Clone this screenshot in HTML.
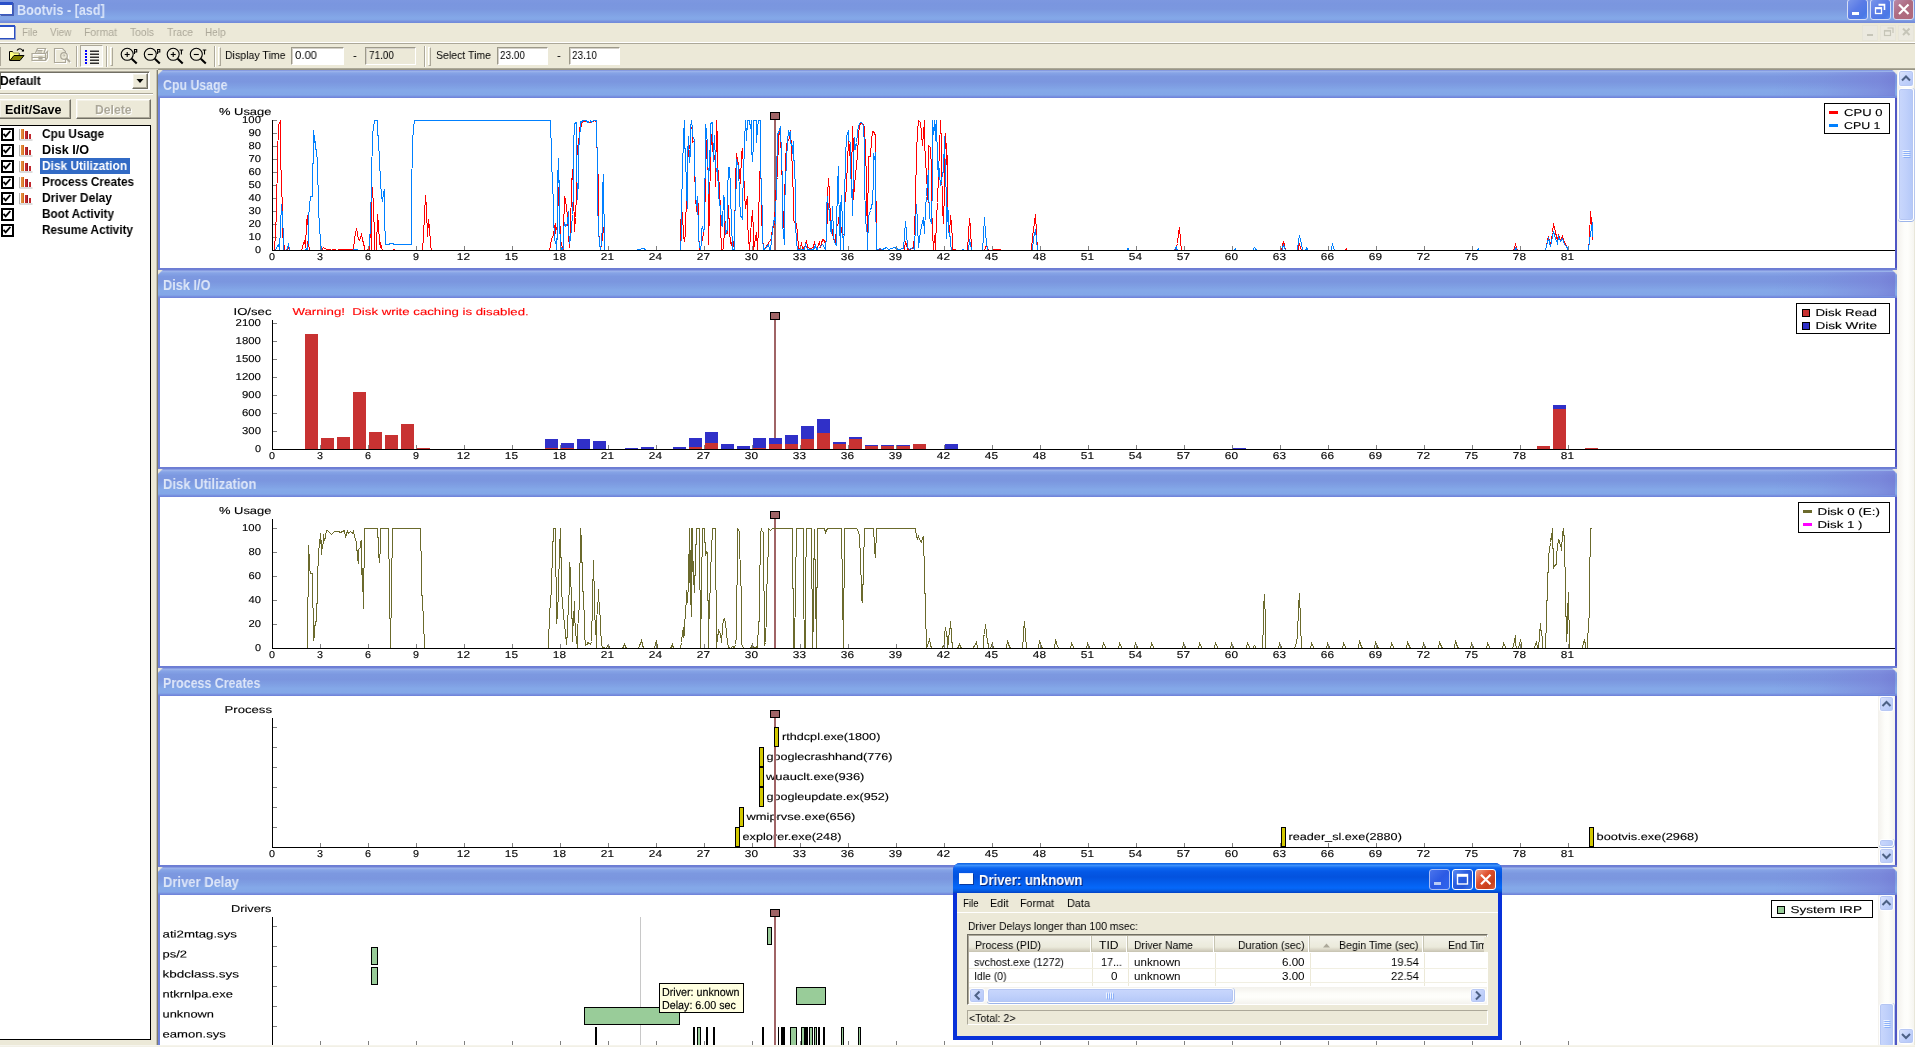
<!DOCTYPE html>
<html><head><meta charset="utf-8"><title>Bootvis - [asd]</title>
<style>
html,body{margin:0;padding:0;}
body{width:1915px;height:1047px;overflow:hidden;background:#ece9d8;position:relative;font-family:"Liberation Sans",sans-serif;}
div,span{position:absolute;box-sizing:border-box;}
.t{white-space:nowrap;line-height:1;transform-origin:0 0;}
svg{position:absolute;left:0;top:0;will-change:transform;}
.t{will-change:transform;}
svg text{font-family:"Liberation Sans",sans-serif;}

.title{left:0;top:0;width:1915px;height:23px;background:linear-gradient(#7d98e0 0px,#7a96df 4px,#7b97df 9px,#7f9fe3 13px,#84a8e8 18px,#82a4e6 20px,#7a93de 21px,#7089d9 23px);}
.cb{top:-1px;width:21px;height:21px;border-radius:3px;border:1px solid #d6def6;background:linear-gradient(135deg,#7a96ea 0%,#5a7be6 45%,#4a78e6 80%,#5a8aee 100%);}
.cb.x{background:linear-gradient(135deg,#b98aa8 0%,#ae6c82 45%,#b0687a 100%);}
.menubar{left:0;top:23px;width:1915px;height:19px;background:#ece9d8;}
.tb{left:0;top:44px;width:1915px;height:25px;background:#ece9d8;}
.fld{top:47px;height:18px;background:#fff;border:1px solid;border-color:#9d9a8a #fff #fff #9d9a8a;box-shadow:inset 1px 1px 0 #d4d0c8;}
.sep{top:46px;width:2px;height:21px;border-left:1px solid #aca899;border-right:1px solid #fff;}
.grip{top:47px;width:3px;height:19px;border:1px solid;border-color:#fff #aca899 #aca899 #fff;}
.btn{background:#ece9d8;border:1px solid;border-color:#fff #716f64 #716f64 #fff;box-shadow:inset -1px -1px 0 #aca899, inset 1px 1px 0 #f4f2e8;}
.cbx{width:13px;height:13px;left:1px;border:2px solid #000;background:#fff;}
.sbtrack{background:linear-gradient(90deg,#f3f1ec 0,#fdfdfa 40%,#fefefb 60%,#f4f3ee 100%);}
.sbbtn{background:linear-gradient(135deg,#dfe7fc 0,#c3d2fb 50%,#b2c6f8 100%);border:1px solid #fff;border-radius:3px;box-shadow:0 0 0 1px #b8c8f4 inset;}
.sbthumb{background:linear-gradient(90deg,#c9d7fc 0,#c1d1fb 45%,#b4c8f8 100%);border:1px solid #fff;border-radius:3px;box-shadow:0 0 0 1px #b5c6f3 inset, 0 1px 0 #9db5ea, 1px 0 0 #b5c6ee;}
.ph{left:158px;width:1739px;height:30px;background:linear-gradient(#6c7bd2 0px,#6f80d6 2px,#9fb6ec 3px,#86a4e6 5px,#7c98e0 8.5px,#7b96df 13.5px,#7e9de2 17.5px,#84a8e8 22.5px,#83a7e8 27px,#7790df 28.5px,#6d80d8 30px);}
.phr{width:120px;height:24px;background:linear-gradient(100deg,rgba(122,124,216,0) 0,rgba(122,124,216,0.15) 40%,rgba(120,122,214,0.5) 85%,rgba(112,112,208,0.6) 100%);}
.pbody{left:160px;width:1735px;background:#fff;}

.dlg{left:953px;top:863px;width:549px;height:177px;background:#0831d9;border-radius:7px 7px 0 0;}
.dtitle{left:953px;top:863px;width:549px;height:30px;border-radius:7px 7px 0 0;background:linear-gradient(#0a5fe0 0px,#3c90fa 2.5px,#0c66f0 5px,#0458e6 9px,#0352de 14px,#0460f0 21px,#0568fa 25px,#0458de 28px,#0340c4 30px);}
.dbody{left:957px;top:893px;width:541px;height:143px;background:#ece9d8;}
.db{top:869px;width:21px;height:21px;border-radius:3px;border:1px solid #fff;background:linear-gradient(135deg,#5c8cf2 0%,#2a5ee0 40%,#2456d8 70%,#3a78ee 100%);}
.db.x{background:linear-gradient(135deg,#f0a088 0%,#e0502e 40%,#c8401c 75%,#e06040 100%);}
.db.dis{background:linear-gradient(135deg,#4a74ec 0%,#2c5ae4 50%,#2f66ee 100%);border-color:#a9bdf5;}
.lvh{top:936px;height:16px;background:linear-gradient(#f3f2ea 0,#ebeadb 11px,#d6d2c2 14px,#c5c2b0 16px);border-right:1px solid #c7c5b2;box-shadow:inset -1px 0 0 #fff;}

</style></head><body>
<div class="title"></div>
<div style="left:0;top:2px;width:13px;height:13px;background:#fff;border:1px solid #3b5bbf;border-left:none;border-top:3px solid #2a50c8;box-shadow:1px 1px 0 #4a60b0"></div>
<span class="t" style="left:17.2px;top:3.2px;font-size:14.3px;font-weight:bold;color:#dbe6f9;transform:scaleX(0.8841);">Bootvis - [asd]</span>
<div class="cb" style="left:1847px"></div>
<div class="cb" style="left:1870px"></div>
<div class="cb x" style="left:1893px"></div>
<svg width="1915" height="23" viewBox="0 0 1915 23">
<rect x="1852" y="12" width="7" height="3" fill="#fff"/>
<path d="M1878.5 4.5h6v5.5 M1878.5 5h6" stroke="#fff" stroke-width="1.6" fill="none"/><rect x="1875.5" y="8" width="6" height="5.5" fill="none" stroke="#fff" stroke-width="1.3"/><rect x="1875" y="7.2" width="7" height="2" fill="#fff"/>
<path d="M1899 4.5l9.5 9.5M1908.5 4.5l-9.5 9.5" stroke="#fff" stroke-width="2.2" fill="none"/>
</svg>
<div class="menubar"></div>
<div style="left:0;top:42px;width:1915px;height:1px;background:#fff"></div>
<div style="left:0;top:43px;width:1915px;height:1px;background:#aca899"></div>
<div style="left:-1px;top:25px;width:16px;height:14px;background:#fff;border:1px solid #2a4fc0;border-top:2px solid #2a50c8;box-shadow:1px 1px 0 #8a9ad0"></div>
<span class="t" style="left:21.5px;top:26.38px;font-size:11.6px;color:#aca899;transform:scaleX(0.8292);">File</span>
<span class="t" style="left:49.7px;top:26.38px;font-size:11.6px;color:#aca899;transform:scaleX(0.8542);">View</span>
<span class="t" style="left:83.5px;top:26.38px;font-size:11.6px;color:#aca899;transform:scaleX(0.8982);">Format</span>
<span class="t" style="left:129.5px;top:26.38px;font-size:11.6px;color:#aca899;transform:scaleX(0.8862);">Tools</span>
<span class="t" style="left:166.5px;top:26.38px;font-size:11.6px;color:#aca899;transform:scaleX(0.8897);">Trace</span>
<span class="t" style="left:205px;top:26.38px;font-size:11.6px;color:#aca899;transform:scaleX(0.8593);">Help</span>
<div style="left:1862px;top:25px;width:16px;height:16px;background:#ebe9df;border:1px solid #e6e4d8"></div>
<div style="left:1880px;top:25px;width:16px;height:16px;background:#ebe9df;border:1px solid #e6e4d8"></div>
<div style="left:1898px;top:25px;width:16px;height:16px;background:#ebe9df;border:1px solid #e6e4d8"></div>
<svg width="1915" height="44" viewBox="0 0 1915 44">
<rect x="1867" y="34" width="6" height="2" fill="#c6c5b8"/>
<path d="M1887.5 28h5.5v5" stroke="#c6c5b8" stroke-width="1.2" fill="none"/><rect x="1884.5" y="30.5" width="6" height="5" fill="none" stroke="#c6c5b8" stroke-width="1.2"/><rect x="1884" y="30" width="7" height="1.6" fill="#c6c5b8"/>
<path d="M1903 28.5l6.5 6.5M1909.5 28.5l-6.5 6.5" stroke="#c6c5b8" stroke-width="2" fill="none"/>
</svg>
<div class="tb"></div>
<div style="left:0;top:68px;width:1915px;height:1px;background:#b5b2a2"></div>
<div style="left:0;top:69px;width:158px;height:1px;background:#d8d5c6"></div>
<div style="left:0;top:47px;width:1px;height:19px;background:#aca899"></div>
<div class="sep" style="left:76px"></div>
<div style="left:80px;top:45px;width:23px;height:22px;background:#f6f5ee;border:1px solid;border-color:#aca899 #fff #fff #aca899"></div>
<div class="sep" style="left:106px"></div>
<div class="grip" style="left:110px"></div>
<div class="sep" style="left:214px"></div>
<div class="grip" style="left:218px"></div>
<div class="sep" style="left:424px"></div>
<div class="grip" style="left:428px"></div>
<span class="t" style="left:225px;top:49.18px;font-size:11.6px;color:#000;transform:scaleX(0.9112);">Display Time</span>
<div class="fld" style="left:291px;width:53px"></div>
<span class="t" style="left:295px;top:49.18px;font-size:11.6px;color:#000;transform:scaleX(0.9744);">0.00</span>
<span class="t" style="left:353px;top:49.18px;font-size:11.6px;color:#000;transform:scaleX(0.9060);">-</span>
<div class="fld" style="left:365px;width:51px;background:#ece9d8"></div>
<span class="t" style="left:368.5px;top:49.18px;font-size:11.6px;color:#000;transform:scaleX(0.8612);">71.00</span>
<span class="t" style="left:436px;top:49.18px;font-size:11.6px;color:#000;transform:scaleX(0.9076);">Select Time</span>
<div class="fld" style="left:497px;width:51px"></div>
<span class="t" style="left:500px;top:49.18px;font-size:11.6px;color:#000;transform:scaleX(0.8612);">23.00</span>
<span class="t" style="left:557px;top:49.18px;font-size:11.6px;color:#000;transform:scaleX(0.9060);">-</span>
<div class="fld" style="left:569px;width:51px"></div>
<span class="t" style="left:572px;top:49.18px;font-size:11.6px;color:#000;transform:scaleX(0.8612);">23.10</span>
<div style="left:0;top:70px;width:158px;height:975px;background:#ece9d8"></div>
<div style="left:156px;top:70px;width:2px;height:975px;background:linear-gradient(90deg,#c4c1b0 0,#c4c1b0 50%,#807d6d 50%,#807d6d 100%)"></div>
<div style="left:-1px;top:71px;width:151px;height:19px;background:#fff;border:1px solid;border-color:#aca899 #fff #fff #aca899;box-shadow:inset 1px 1px 0 #716f64"></div>
<span class="t" style="left:0.2px;top:74.97px;font-size:12.2px;font-weight:bold;color:#000;transform:scaleX(0.9867);">Default</span>
<div class="btn" style="left:132px;top:73px;width:16px;height:16px"></div>
<svg width="160" height="100" viewBox="0 0 160 100"><path d="M136.5 79h7l-3.5 4z" fill="#000"/></svg>
<div style="left:0;top:93px;width:153px;height:2px;border-top:1px solid #aca899;border-bottom:1px solid #fff"></div>
<div class="btn" style="left:-1px;top:99px;width:72px;height:20px"></div>
<span class="t" style="left:4.5px;top:103.57px;font-size:12.2px;font-weight:bold;color:#000;transform:scaleX(1.0287);">Edit/Save</span>
<div class="btn" style="left:76px;top:99px;width:75px;height:20px"></div>
<span class="t" style="left:95.5px;top:104.57px;font-size:12.2px;font-weight:bold;color:#fff;transform:scaleX(0.9967);">Delete</span>
<span class="t" style="left:94.5px;top:103.57px;font-size:12.2px;font-weight:bold;color:#aca899;transform:scaleX(0.9967);">Delete</span>
<div style="left:-1px;top:125px;width:152px;height:915px;background:#fff;border:1px solid #000"></div>
<div class="cbx" style="top:128px"></div>
<span class="t" style="left:41.9px;top:127.87px;font-size:12.2px;font-weight:bold;color:#000;transform:scaleX(0.9745);">Cpu Usage</span>
<div class="cbx" style="top:144px"></div>
<span class="t" style="left:41.9px;top:143.87px;font-size:12.2px;font-weight:bold;color:#000;transform:scaleX(1.0368);">Disk I/O</span>
<div class="cbx" style="top:160px"></div>
<div style="left:40px;top:158px;width:90px;height:16px;background:#316ac5"></div>
<span class="t" style="left:41.9px;top:159.87px;font-size:12.2px;font-weight:bold;color:#fff;transform:scaleX(0.9732);">Disk Utilization</span>
<div class="cbx" style="top:176px"></div>
<span class="t" style="left:41.9px;top:175.87px;font-size:12.2px;font-weight:bold;color:#000;transform:scaleX(0.9631);">Process Creates</span>
<div class="cbx" style="top:192px"></div>
<span class="t" style="left:41.9px;top:191.87px;font-size:12.2px;font-weight:bold;color:#000;transform:scaleX(0.9844);">Driver Delay</span>
<div class="cbx" style="top:208px"></div>
<span class="t" style="left:41.9px;top:207.87px;font-size:12.2px;font-weight:bold;color:#000;transform:scaleX(0.9641);">Boot Activity</span>
<div class="cbx" style="top:224px"></div>
<span class="t" style="left:41.9px;top:223.87px;font-size:12.2px;font-weight:bold;color:#000;transform:scaleX(0.9643);">Resume Activity</span>
<svg width="160" height="260" viewBox="0 0 160 260"><path d="M3.5 133.8 l2.2 2.6 l4.6 -5.4" stroke="#000" stroke-width="1.9" fill="none"/><path d="M19.5 129 v11 h13" stroke="#b9b9b9" stroke-width="1" fill="none"/><rect x="21" y="129" width="2" height="10" fill="#e08a3a"/><rect x="23" y="129" width="1" height="10" fill="#d2691e"/><rect x="25" y="131" width="2" height="8" fill="#c2272d"/><rect x="27" y="131" width="1" height="8" fill="#8e1a20"/><rect x="29" y="134" width="2" height="5" fill="#c2272d"/><path d="M3.5 149.8 l2.2 2.6 l4.6 -5.4" stroke="#000" stroke-width="1.9" fill="none"/><path d="M19.5 145 v11 h13" stroke="#b9b9b9" stroke-width="1" fill="none"/><rect x="21" y="145" width="2" height="10" fill="#e08a3a"/><rect x="23" y="145" width="1" height="10" fill="#d2691e"/><rect x="25" y="147" width="2" height="8" fill="#c2272d"/><rect x="27" y="147" width="1" height="8" fill="#8e1a20"/><rect x="29" y="150" width="2" height="5" fill="#c2272d"/><path d="M3.5 165.8 l2.2 2.6 l4.6 -5.4" stroke="#000" stroke-width="1.9" fill="none"/><path d="M19.5 161 v11 h13" stroke="#b9b9b9" stroke-width="1" fill="none"/><rect x="21" y="161" width="2" height="10" fill="#e08a3a"/><rect x="23" y="161" width="1" height="10" fill="#d2691e"/><rect x="25" y="163" width="2" height="8" fill="#c2272d"/><rect x="27" y="163" width="1" height="8" fill="#8e1a20"/><rect x="29" y="166" width="2" height="5" fill="#c2272d"/><path d="M3.5 181.8 l2.2 2.6 l4.6 -5.4" stroke="#000" stroke-width="1.9" fill="none"/><path d="M19.5 177 v11 h13" stroke="#b9b9b9" stroke-width="1" fill="none"/><rect x="21" y="177" width="2" height="10" fill="#e08a3a"/><rect x="23" y="177" width="1" height="10" fill="#d2691e"/><rect x="25" y="179" width="2" height="8" fill="#c2272d"/><rect x="27" y="179" width="1" height="8" fill="#8e1a20"/><rect x="29" y="182" width="2" height="5" fill="#c2272d"/><path d="M3.5 197.8 l2.2 2.6 l4.6 -5.4" stroke="#000" stroke-width="1.9" fill="none"/><path d="M19.5 193 v11 h13" stroke="#b9b9b9" stroke-width="1" fill="none"/><rect x="21" y="193" width="2" height="10" fill="#e08a3a"/><rect x="23" y="193" width="1" height="10" fill="#d2691e"/><rect x="25" y="195" width="2" height="8" fill="#c2272d"/><rect x="27" y="195" width="1" height="8" fill="#8e1a20"/><rect x="29" y="198" width="2" height="5" fill="#c2272d"/><path d="M3.5 213.8 l2.2 2.6 l4.6 -5.4" stroke="#000" stroke-width="1.9" fill="none"/><path d="M3.5 229.8 l2.2 2.6 l4.6 -5.4" stroke="#000" stroke-width="1.9" fill="none"/></svg>
<div style="left:0;top:1045px;width:1915px;height:2px;background:#f4f3ea"></div>
<div class="sbtrack" style="left:1897px;top:70px;width:18px;height:975px"></div>
<div style="left:1914px;top:70px;width:1px;height:975px;background:#e9e7da"></div>
<div class="sbbtn" style="left:1898px;top:70px;width:16px;height:17px"></div>
<div class="sbthumb" style="left:1898px;top:88px;width:16px;height:133px"></div>
<div class="sbbtn" style="left:1898px;top:1028px;width:16px;height:16px"></div>
<svg width="1915" height="1047" viewBox="0 0 1915 1047">
<path d="M1902 80.5l4-4l4 4" stroke="#4d6185" stroke-width="2" fill="none"/>
<path d="M1902 1034l4 4l4-4" stroke="#4d6185" stroke-width="2" fill="none"/>
<path d="M1902.5 150.5h7M1902.5 152.5h7M1902.5 154.5h7M1902.5 156.5h7" stroke="#eef4fe" stroke-width="1"/>
<path d="M1903.5 151.5h7M1903.5 153.5h7M1903.5 155.5h7M1903.5 157.5h7" stroke="#8cb0f8" stroke-width="1"/>
</svg>
<div class="pbody" style="top:98px;height:170px"></div>
<div style="left:158px;top:68px;width:2px;height:200px;background:#6f82dc"></div>
<div style="left:1895px;top:68px;width:2px;height:200px;background:#4f56c4"></div>
<div class="ph" style="top:68px"></div>
<div class="phr" style="left:1775px;top:72px"></div>
<div style="left:158px;top:70px;width:5px;height:5px;background:linear-gradient(135deg,#ece9d8 0,#ece9d8 38%,rgba(236,233,216,0) 55%)"></div>
<div style="left:1892px;top:70px;width:5px;height:5px;background:linear-gradient(225deg,#f0eee2 0,#f0eee2 38%,rgba(236,233,216,0) 55%)"></div>
<div class="pbody" style="top:298px;height:169px"></div>
<div style="left:158px;top:268px;width:2px;height:199px;background:#6f82dc"></div>
<div style="left:1895px;top:268px;width:2px;height:199px;background:#4f56c4"></div>
<div class="ph" style="top:268px"></div>
<div class="phr" style="left:1775px;top:272px"></div>
<div style="left:158px;top:270px;width:5px;height:5px;background:linear-gradient(135deg,#ece9d8 0,#ece9d8 38%,rgba(236,233,216,0) 55%)"></div>
<div style="left:1892px;top:270px;width:5px;height:5px;background:linear-gradient(225deg,#f0eee2 0,#f0eee2 38%,rgba(236,233,216,0) 55%)"></div>
<div class="pbody" style="top:497px;height:169px"></div>
<div style="left:158px;top:467px;width:2px;height:199px;background:#6f82dc"></div>
<div style="left:1895px;top:467px;width:2px;height:199px;background:#4f56c4"></div>
<div class="ph" style="top:467px"></div>
<div class="phr" style="left:1775px;top:471px"></div>
<div style="left:158px;top:469px;width:5px;height:5px;background:linear-gradient(135deg,#ece9d8 0,#ece9d8 38%,rgba(236,233,216,0) 55%)"></div>
<div style="left:1892px;top:469px;width:5px;height:5px;background:linear-gradient(225deg,#f0eee2 0,#f0eee2 38%,rgba(236,233,216,0) 55%)"></div>
<div class="pbody" style="top:696px;height:169px"></div>
<div style="left:158px;top:666px;width:2px;height:199px;background:#6f82dc"></div>
<div style="left:1895px;top:666px;width:2px;height:199px;background:#4f56c4"></div>
<div class="ph" style="top:666px"></div>
<div class="phr" style="left:1775px;top:670px"></div>
<div style="left:158px;top:668px;width:5px;height:5px;background:linear-gradient(135deg,#ece9d8 0,#ece9d8 38%,rgba(236,233,216,0) 55%)"></div>
<div style="left:1892px;top:668px;width:5px;height:5px;background:linear-gradient(225deg,#f0eee2 0,#f0eee2 38%,rgba(236,233,216,0) 55%)"></div>
<div class="pbody" style="top:895px;height:150px"></div>
<div style="left:158px;top:865px;width:2px;height:180px;background:#6f82dc"></div>
<div style="left:1895px;top:865px;width:2px;height:180px;background:#4f56c4"></div>
<div class="ph" style="top:865px"></div>
<div class="phr" style="left:1775px;top:869px"></div>
<div style="left:158px;top:867px;width:5px;height:5px;background:linear-gradient(135deg,#ece9d8 0,#ece9d8 38%,rgba(236,233,216,0) 55%)"></div>
<div style="left:1892px;top:867px;width:5px;height:5px;background:linear-gradient(225deg,#f0eee2 0,#f0eee2 38%,rgba(236,233,216,0) 55%)"></div>
<span class="t" style="left:162.6px;top:79.32px;font-size:13.8px;font-weight:bold;color:#dde6f8;transform:scaleX(0.8934);">Cpu Usage</span>
<span class="t" style="left:162.6px;top:279.32px;font-size:13.8px;font-weight:bold;color:#dde6f8;transform:scaleX(0.9224);">Disk I/O</span>
<span class="t" style="left:162.6px;top:478.32px;font-size:13.8px;font-weight:bold;color:#dde6f8;transform:scaleX(0.9443);">Disk Utilization</span>
<span class="t" style="left:162.6px;top:677.32px;font-size:13.8px;font-weight:bold;color:#dde6f8;transform:scaleX(0.9004);">Process Creates</span>
<span class="t" style="left:162.6px;top:876.32px;font-size:13.8px;font-weight:bold;color:#dde6f8;transform:scaleX(0.9423);">Driver Delay</span>
<div style="left:158px;top:68px;width:1757px;height:2px;background:linear-gradient(#b5b2a2,#8f8c7c)"></div>
<svg width="240" height="70" viewBox="0 0 240 70"><path d="M9.5 60.5v-9h3l1 1.5h5.5v3" fill="#ffff66" stroke="#000" stroke-width="1"/><rect x="10" y="52" width="9" height="6" fill="#ffff99" opacity="0.6"/><path d="M10 60.5l4-5h10l-4 5z" fill="#808000" stroke="#000" stroke-width="1"/><path d="M17 50.5c1.5-2.5 4.5-2.5 6 0.5" fill="none" stroke="#000" stroke-width="1.1"/><path d="M21.5 51.5h2.5v-2.5z" fill="#000"/><g transform="translate(1,1)" stroke="#fff" fill="none" stroke-width="1.2"><path d="M35.5 53l2-4.5h8l-1.5 4.5M32 53.500h13.500l2-2v6l-2 3h-13.500zM32 57.500h13.500"/></g><g stroke="#aca899" fill="none" stroke-width="1.2"><path d="M35.500 53l2-4.500h8l-1.500 4.500M32 53.500h13.500l2-2v6l-2 3h-13.500zM32 57.500h13.500M45.500 53.500v7M37.500 50.500h5M37 52h5"/><rect x="39" y="57" width="3" height="2" fill="#aca899"/></g><g transform="translate(1,1)" stroke="#fff" fill="none" stroke-width="1.2"><path d="M54.500 48.500h8l3 3v11h-11z"/><circle cx="64" cy="56" r="3.3"/><path d="M66.500 58.500l3.500 3.500"/></g><g stroke="#aca899" fill="none" stroke-width="1.2"><path d="M54.500 48.500h8l3 3v11h-11z"/><circle cx="64" cy="56" r="3.300" fill="#ece9d8"/><path d="M66.500 58.500l3.500 3.500" stroke-width="1.8"/><path d="M63 55.500c1-1.500 2.500-0.500 1 1" stroke-width="1"/></g><rect x="85" y="50" width="2" height="2" fill="#0000ff"/><rect x="90" y="50.6" width="9" height="1.2" fill="#000"/><rect x="85" y="53" width="2" height="2" fill="#0000ff"/><rect x="90" y="53.6" width="9" height="1.2" fill="#000"/><rect x="85" y="56" width="2" height="2" fill="#0000ff"/><rect x="90" y="56.6" width="9" height="1.2" fill="#000"/><rect x="85" y="59" width="2" height="2" fill="#0000ff"/><rect x="90" y="59.6" width="9" height="1.2" fill="#000"/><rect x="85" y="62" width="2" height="2" fill="#0000ff"/><rect x="90" y="62.6" width="9" height="1.2" fill="#000"/><circle cx="127.2" cy="54.3" r="6" fill="none" stroke="#000" stroke-width="1.1"/><path d="M131.7 58.8l5 4.700" stroke="#000" stroke-width="2.1"/><path d="M124.7 54.500h5" stroke="#000" stroke-width="1.1"/><path d="M127.2 52v5" stroke="#000" stroke-width="1.1"/><path d="M134.5 54v-4.500h2.200v2.500h-2.200" stroke="#000" stroke-width="1.1" fill="none"/><circle cx="150.3" cy="54.3" r="6" fill="none" stroke="#000" stroke-width="1.1"/><path d="M154.8 58.8l5 4.700" stroke="#000" stroke-width="2.1"/><path d="M147.8 54.500h5" stroke="#000" stroke-width="1.1"/><path d="M157.6 54v-4.500h2.200v2.500h-2.200" stroke="#000" stroke-width="1.1" fill="none"/><circle cx="173.2" cy="54.3" r="6" fill="none" stroke="#000" stroke-width="1.1"/><path d="M177.7 58.8l5 4.700" stroke="#000" stroke-width="2.1"/><path d="M170.7 54.500h5" stroke="#000" stroke-width="1.1"/><path d="M173.2 52v5" stroke="#000" stroke-width="1.1"/><path d="M179.6 50h3.600M181.4 50v4.500" stroke="#000" stroke-width="1.1" fill="none"/><circle cx="196.3" cy="54.3" r="6" fill="none" stroke="#000" stroke-width="1.1"/><path d="M200.8 58.8l5 4.700" stroke="#000" stroke-width="2.1"/><path d="M193.8 54.500h5" stroke="#000" stroke-width="1.1"/><path d="M202.7 50h3.600M204.5 50v4.500" stroke="#000" stroke-width="1.1" fill="none"/></svg>
<div class="sbtrack" style="left:1878px;top:696px;width:17px;height:169px"></div>
<div class="sbbtn" style="left:1879px;top:696px;width:15px;height:16px"></div>
<div class="sbbtn" style="left:1879px;top:848px;width:15px;height:16px"></div>
<div class="sbthumb" style="left:1879px;top:839px;width:15px;height:8px"></div>
<div class="sbtrack" style="left:1878px;top:895px;width:17px;height:150px"></div>
<div class="sbbtn" style="left:1879px;top:895px;width:15px;height:16px"></div>
<div class="sbthumb" style="left:1879px;top:1003px;width:15px;height:44px"></div>
<svg width="1915" height="1047" viewBox="0 0 1915 1047">
<rect x="272" y="120" width="1" height="131" fill="#000"/>
<text transform="translate(254.95,253) scale(0.2719,0.2500) rotate(0.05)" font-size="40" fill="#000" stroke="#000" stroke-width="0.5">0</text>
<rect x="273" y="237" width="4" height="1" fill="#808080"/>
<text transform="translate(248.5,240) scale(0.2809,0.2500) rotate(0.05)" font-size="40" fill="#000" stroke="#000" stroke-width="0.5">10</text>
<rect x="273" y="224" width="4" height="1" fill="#808080"/>
<text transform="translate(248.5,227) scale(0.2809,0.2500) rotate(0.05)" font-size="40" fill="#000" stroke="#000" stroke-width="0.5">20</text>
<rect x="273" y="211" width="4" height="1" fill="#808080"/>
<text transform="translate(248.5,214) scale(0.2809,0.2500) rotate(0.05)" font-size="40" fill="#000" stroke="#000" stroke-width="0.5">30</text>
<rect x="273" y="198" width="4" height="1" fill="#808080"/>
<text transform="translate(248.5,201) scale(0.2809,0.2500) rotate(0.05)" font-size="40" fill="#000" stroke="#000" stroke-width="0.5">40</text>
<rect x="273" y="185" width="4" height="1" fill="#808080"/>
<text transform="translate(248.5,188) scale(0.2809,0.2500) rotate(0.05)" font-size="40" fill="#000" stroke="#000" stroke-width="0.5">50</text>
<rect x="273" y="172" width="4" height="1" fill="#808080"/>
<text transform="translate(248.5,175) scale(0.2809,0.2500) rotate(0.05)" font-size="40" fill="#000" stroke="#000" stroke-width="0.5">60</text>
<rect x="273" y="159" width="4" height="1" fill="#808080"/>
<text transform="translate(248.5,162) scale(0.2809,0.2500) rotate(0.05)" font-size="40" fill="#000" stroke="#000" stroke-width="0.5">70</text>
<rect x="273" y="146" width="4" height="1" fill="#808080"/>
<text transform="translate(248.5,149) scale(0.2809,0.2500) rotate(0.05)" font-size="40" fill="#000" stroke="#000" stroke-width="0.5">80</text>
<rect x="273" y="133" width="4" height="1" fill="#808080"/>
<text transform="translate(248.5,136) scale(0.2809,0.2500) rotate(0.05)" font-size="40" fill="#000" stroke="#000" stroke-width="0.5">90</text>
<rect x="273" y="120" width="4" height="1" fill="#808080"/>
<text transform="translate(242.05,123) scale(0.2839,0.2500) rotate(0.05)" font-size="40" fill="#000" stroke="#000" stroke-width="0.5">100</text>
<text transform="translate(219,115) scale(0.3235,0.2500) rotate(0.05)" font-size="40" fill="#000" stroke="#000" stroke-width="0.5">% Usage</text>
<rect x="774" y="120" width="2" height="130" fill="#a06466"/><rect x="770.5" y="112.5" width="9" height="7" fill="#a06466" stroke="#000" stroke-width="1"/>
<polyline points="274.5,250.5 276.5,213.5 277.5,156.5 278.5,125.5 280.5,120.5 280.5,155.5 281.5,183.5 282.5,210.5 282.5,236.5 283.5,238.5 284.5,250.5 287.5,250.5 288.5,247.5 289.5,250.5 301.5,250.5 303.5,243.5 304.5,240.5 305.5,247.5 306.5,223.5 307.5,215.5 308.5,233.5 307.5,249.5 308.5,242.5 309.5,250.5 321.5,250.5 323.5,247.5 326.5,249.5 330.5,249.5 331.5,250.5 333.5,249.5 335.5,249.5 336.5,250.5 339.5,249.5 353.5,249.5 354.5,238.5 356.5,228.5 357.5,233.5 358.5,239.5 359.5,240.5 361.5,234.5 362.5,239.5 364.5,247.5 364.5,250.5 369.5,249.5 370.5,225.5 371.5,249.5 371.5,208.5 372.5,187.5 373.5,207.5 374.5,236.5 374.5,250.5 376.5,250.5 377.5,214.5 378.5,224.5 379.5,242.5 380.5,247.5 380.5,242.5 381.5,247.5 382.5,250.5 393.5,250.5 393.5,249.5 394.5,249.5 394.5,250.5 422.5,250.5 423.5,235.5 424.5,214.5 425.5,195.5 426.5,208.5 427.5,236.5 428.5,219.5 429.5,227.5 430.5,244.5 431.5,250.5" fill="none" stroke="#ff0000" stroke-width="1" stroke-linejoin="miter" shape-rendering="crispEdges"/>
<polyline points="549.5,250.5 550.5,245.5 551.5,238.5 553.5,235.5 554.5,227.5 555.5,223.5 555.5,233.5 556.5,227.5 557.5,226.5 558.5,187.5 559.5,201.5 559.5,223.5 560.5,229.5 560.5,238.5 561.5,244.5 562.5,247.5 563.5,250.5 563.5,233.5 564.5,196.5 565.5,199.5 567.5,216.5 568.5,235.5 569.5,247.5 570.5,230.5 571.5,186.5 572.5,169.5 573.5,190.5 574.5,231.5 575.5,217.5 576.5,193.5 576.5,164.5 577.5,146.5 578.5,143.5 580.5,121.5 580.5,131.5 581.5,122.5 584.5,121.5 589.5,122.5 591.5,122.5 594.5,120.5 596.5,121.5 596.5,146.5 597.5,148.5 598.5,198.5 598.5,230.5 600.5,250.5 600.5,249.5 602.5,238.5 603.5,227.5 604.5,238.5 604.5,250.5 680.5,250.5 680.5,229.5 681.5,208.5 682.5,214.5 683.5,235.5 684.5,241.5 685.5,232.5 686.5,193.5 687.5,204.5 687.5,161.5 689.5,145.5 690.5,149.5 690.5,128.5 692.5,127.5 692.5,142.5 694.5,140.5 694.5,167.5 695.5,195.5 696.5,211.5 697.5,196.5 698.5,208.5 698.5,230.5 699.5,250.5 701.5,244.5 702.5,238.5 704.5,227.5 705.5,179.5 706.5,140.5 707.5,145.5 708.5,193.5 708.5,244.5 709.5,208.5 710.5,156.5 711.5,134.5 712.5,142.5 713.5,161.5 715.5,153.5 715.5,186.5 716.5,120.5 717.5,140.5 717.5,179.5 718.5,170.5 719.5,192.5 720.5,207.5 720.5,224.5 721.5,250.5 723.5,249.5 724.5,226.5 724.5,208.5 725.5,232.5 727.5,233.5 728.5,205.5 729.5,230.5 730.5,243.5 731.5,242.5 732.5,249.5 734.5,238.5 735.5,182.5 736.5,153.5 737.5,159.5 738.5,164.5 740.5,183.5 741.5,153.5 742.5,149.5 742.5,147.5 742.5,149.5 743.5,167.5 744.5,193.5 745.5,208.5 746.5,201.5 747.5,196.5 747.5,222.5 749.5,250.5 750.5,233.5 752.5,210.5 753.5,232.5 753.5,250.5 756.5,232.5 757.5,249.5 758.5,226.5 759.5,179.5 760.5,163.5 761.5,193.5 761.5,215.5 762.5,236.5 763.5,249.5 765.5,247.5 771.5,238.5 772.5,226.5 773.5,227.5 774.5,222.5 776.5,179.5 777.5,177.5 778.5,134.5 779.5,130.5 780.5,139.5 781.5,156.5 782.5,193.5 783.5,227.5 784.5,207.5 785.5,162.5 786.5,143.5 788.5,140.5 789.5,137.5 790.5,130.5 791.5,149.5 792.5,171.5 793.5,202.5 793.5,220.5 795.5,223.5 796.5,223.5 797.5,233.5 798.5,247.5 799.5,249.5 801.5,243.5 802.5,248.5 804.5,247.5 806.5,240.5 807.5,247.5 810.5,248.5 813.5,247.5 814.5,241.5 815.5,247.5 817.5,247.5 819.5,241.5 820.5,247.5 822.5,239.5 824.5,240.5 825.5,244.5 826.5,237.5 827.5,210.5 827.5,196.5 828.5,178.5 829.5,192.5 830.5,223.5 830.5,216.5 832.5,233.5 833.5,238.5 835.5,242.5 836.5,226.5 838.5,223.5 838.5,217.5 840.5,214.5 840.5,223.5 842.5,235.5 844.5,233.5 844.5,202.5 845.5,201.5 847.5,164.5 848.5,138.5 850.5,161.5 851.5,179.5 852.5,126.5 853.5,149.5 853.5,199.5 854.5,185.5 856.5,164.5 857.5,155.5 858.5,134.5 859.5,125.5 860.5,123.5 862.5,123.5 864.5,127.5 865.5,149.5 866.5,182.5 866.5,199.5 867.5,231.5 868.5,156.5 870.5,156.5 871.5,140.5 872.5,131.5 874.5,132.5 875.5,136.5 875.5,193.5 876.5,207.5 876.5,249.5 878.5,249.5 880.5,248.5 881.5,250.5 904.5,250.5 904.5,249.5 905.5,241.5 906.5,244.5 907.5,249.5 910.5,249.5 913.5,247.5 914.5,235.5 915.5,198.5 916.5,153.5 917.5,131.5 918.5,120.5 920.5,122.5 921.5,133.5 922.5,145.5 924.5,120.5 924.5,136.5 925.5,165.5 926.5,170.5 927.5,196.5 928.5,202.5 928.5,145.5 930.5,147.5 931.5,170.5 931.5,202.5 932.5,232.5 933.5,249.5 934.5,235.5 935.5,249.5 936.5,217.5 937.5,202.5 938.5,174.5 939.5,149.5 940.5,120.5 941.5,145.5 941.5,161.5 942.5,208.5 943.5,223.5 944.5,189.5 944.5,143.5 945.5,133.5 946.5,164.5 946.5,143.5 947.5,165.5 947.5,208.5 948.5,214.5 949.5,235.5 950.5,215.5 951.5,223.5 952.5,242.5 952.5,249.5 955.5,249.5 955.5,250.5 967.5,250.5 968.5,233.5 969.5,218.5 970.5,227.5 971.5,249.5" fill="none" stroke="#ff0000" stroke-width="1" stroke-linejoin="miter" shape-rendering="crispEdges"/>
<polyline points="984.5,250.5 985.5,247.5 986.5,245.5 987.5,247.5 988.5,250.5 992.5,250.5 992.5,249.5 1000.5,249.5 1000.5,250.5 1031.5,250.5 1032.5,236.5 1034.5,222.5 1035.5,214.5 1036.5,232.5 1037.5,250.5 1175.5,250.5 1177.5,243.5 1178.5,233.5 1179.5,227.5 1180.5,240.5 1181.5,250.5 1281.5,250.5 1282.5,245.5 1283.5,241.5 1284.5,245.5 1285.5,250.5 1298.5,250.5 1298.5,246.5 1299.5,244.5 1300.5,247.5 1301.5,250.5 1344.5,250.5 1345.5,249.5 1346.5,248.5 1346.5,249.5 1347.5,250.5 1513.5,250.5 1514.5,247.5 1515.5,244.5 1516.5,247.5 1517.5,250.5 1545.5,250.5 1547.5,240.5 1548.5,236.5 1550.5,245.5 1552.5,232.5 1553.5,223.5 1555.5,232.5 1557.5,240.5 1558.5,234.5 1560.5,240.5 1562.5,236.5 1564.5,242.5 1566.5,245.5 1568.5,250.5 1588.5,250.5 1589.5,238.5 1590.5,211.5 1591.5,222.5 1592.5,226.5 1592.5,239.5" fill="none" stroke="#ff0000" stroke-width="1" stroke-linejoin="miter" shape-rendering="crispEdges"/>
<polyline points="275.5,250.5 276.5,247.5 278.5,244.5 279.5,249.5 279.5,250.5 280.5,226.5 281.5,204.5 282.5,217.5 283.5,238.5 283.5,250.5 286.5,250.5 288.5,244.5 289.5,249.5 289.5,250.5 305.5,250.5 306.5,248.5 306.5,250.5 307.5,250.5 308.5,238.5 308.5,217.5 309.5,206.5 310.5,196.5 312.5,196.5 312.5,164.5 313.5,162.5 313.5,130.5 314.5,142.5 314.5,135.5 315.5,145.5 315.5,149.5 316.5,149.5 317.5,164.5 317.5,167.5 318.5,201.5 318.5,208.5 319.5,226.5 320.5,241.5 321.5,250.5 353.5,250.5 353.5,249.5 357.5,249.5 357.5,250.5 368.5,250.5 369.5,242.5 370.5,226.5 371.5,179.5 372.5,135.5 373.5,127.5 374.5,120.5 377.5,120.5 377.5,134.5 378.5,136.5 379.5,164.5 380.5,176.5 380.5,179.5 380.5,182.5 381.5,195.5 382.5,201.5 383.5,192.5 384.5,189.5 384.5,217.5 385.5,244.5 387.5,244.5 391.5,243.5 395.5,244.5 411.5,244.5 411.5,196.5 412.5,142.5 413.5,127.5 414.5,120.5 502.5,120.5 550.5,120.5 550.5,137.5 551.5,138.5 551.5,171.5 552.5,172.5 553.5,214.5 553.5,216.5 554.5,238.5 555.5,243.5 556.5,238.5 556.5,250.5 557.5,230.5 557.5,182.5 558.5,158.5 558.5,182.5 559.5,180.5 559.5,223.5 560.5,244.5 561.5,249.5 562.5,249.5 563.5,247.5 563.5,230.5 564.5,222.5 565.5,226.5 567.5,223.5 568.5,211.5 568.5,227.5 569.5,243.5 570.5,238.5 571.5,227.5 572.5,214.5 573.5,190.5 573.5,146.5 574.5,123.5 576.5,122.5 576.5,164.5 577.5,199.5 578.5,179.5 578.5,146.5 579.5,142.5 580.5,121.5 581.5,122.5 582.5,120.5 586.5,120.5 587.5,122.5 589.5,121.5 590.5,120.5 591.5,122.5 593.5,120.5 596.5,120.5 596.5,146.5 597.5,147.5 597.5,201.5 598.5,230.5 599.5,243.5 600.5,250.5 601.5,242.5 602.5,223.5 602.5,190.5 603.5,174.5 603.5,213.5 604.5,214.5 604.5,250.5 637.5,250.5 637.5,249.5 644.5,248.5 645.5,250.5 680.5,250.5 681.5,232.5 681.5,208.5 682.5,171.5 683.5,136.5 684.5,120.5 684.5,147.5 685.5,149.5 686.5,193.5 687.5,208.5 687.5,155.5 688.5,136.5 689.5,162.5 690.5,152.5 690.5,128.5 691.5,120.5 692.5,128.5 692.5,136.5 694.5,139.5 694.5,158.5 695.5,193.5 696.5,205.5 697.5,196.5 698.5,232.5 698.5,238.5 699.5,245.5 700.5,250.5 701.5,242.5 701.5,230.5 702.5,226.5 703.5,231.5 704.5,227.5 704.5,179.5 705.5,177.5 705.5,124.5 706.5,131.5 707.5,146.5 707.5,140.5 708.5,193.5 709.5,150.5 710.5,156.5 710.5,123.5 712.5,122.5 713.5,161.5 714.5,135.5 715.5,164.5 716.5,170.5 717.5,168.5 718.5,192.5 719.5,205.5 720.5,205.5 721.5,224.5 722.5,226.5 723.5,195.5 724.5,198.5 724.5,211.5 725.5,233.5 727.5,229.5 727.5,193.5 728.5,167.5 729.5,167.5 730.5,187.5 730.5,189.5 731.5,227.5 732.5,244.5 732.5,249.5 734.5,249.5 734.5,226.5 735.5,196.5 736.5,182.5 736.5,159.5 737.5,164.5 738.5,165.5 739.5,196.5 740.5,216.5 742.5,217.5 742.5,219.5 742.5,199.5 743.5,176.5 744.5,142.5 745.5,120.5 746.5,134.5 746.5,140.5 747.5,120.5 748.5,120.5 749.5,120.5 750.5,128.5 751.5,120.5 751.5,147.5 752.5,161.5 753.5,142.5 753.5,120.5 756.5,120.5 756.5,142.5 757.5,128.5 758.5,120.5 760.5,120.5 760.5,162.5 761.5,193.5 762.5,216.5 762.5,238.5 763.5,249.5 765.5,248.5 768.5,244.5 769.5,249.5 770.5,249.5 772.5,230.5 773.5,222.5 774.5,217.5 775.5,223.5 776.5,179.5 777.5,134.5 779.5,130.5 780.5,126.5 780.5,136.5 781.5,146.5 782.5,193.5 782.5,223.5 783.5,233.5 784.5,244.5 784.5,208.5 785.5,182.5 786.5,159.5 787.5,142.5 788.5,130.5 789.5,134.5 790.5,131.5 790.5,142.5 792.5,146.5 792.5,153.5 793.5,141.5 793.5,159.5 794.5,161.5 795.5,196.5 795.5,223.5 796.5,242.5 797.5,249.5 804.5,249.5 805.5,244.5 807.5,249.5 813.5,249.5 815.5,245.5 816.5,249.5 818.5,248.5 821.5,245.5 822.5,244.5 824.5,247.5 825.5,249.5 826.5,235.5 826.5,208.5 827.5,196.5 828.5,208.5 829.5,210.5 830.5,230.5 831.5,233.5 832.5,206.5 833.5,235.5 834.5,242.5 836.5,245.5 836.5,226.5 837.5,186.5 838.5,166.5 838.5,187.5 839.5,220.5 840.5,250.5 840.5,208.5 841.5,195.5 842.5,226.5 843.5,249.5 844.5,223.5 844.5,201.5 845.5,158.5 846.5,136.5 848.5,130.5 848.5,140.5 850.5,142.5 850.5,177.5 851.5,180.5 852.5,215.5 853.5,164.5 854.5,137.5 855.5,149.5 856.5,142.5 857.5,133.5 858.5,125.5 860.5,122.5 861.5,122.5 863.5,125.5 864.5,147.5 864.5,180.5 865.5,219.5 867.5,236.5 867.5,250.5 868.5,216.5 870.5,210.5 872.5,202.5 873.5,177.5 873.5,153.5 874.5,159.5 875.5,152.5 875.5,193.5 876.5,250.5 879.5,248.5 882.5,249.5 886.5,247.5 888.5,249.5 894.5,247.5 898.5,249.5 903.5,248.5 904.5,235.5 905.5,221.5 906.5,232.5 907.5,247.5 909.5,249.5 912.5,247.5 914.5,249.5 915.5,223.5 916.5,204.5 917.5,223.5 918.5,247.5 919.5,238.5 921.5,226.5 923.5,217.5 924.5,233.5 925.5,208.5 926.5,196.5 927.5,179.5 928.5,170.5 928.5,185.5 929.5,217.5 931.5,223.5 932.5,179.5 932.5,120.5 933.5,134.5 934.5,120.5 935.5,140.5 935.5,127.5 936.5,120.5 937.5,162.5 938.5,176.5 938.5,161.5 940.5,185.5 941.5,182.5 942.5,172.5 943.5,172.5 944.5,137.5 944.5,136.5 945.5,179.5 946.5,193.5 946.5,238.5 947.5,207.5 948.5,213.5 948.5,230.5 950.5,238.5 950.5,243.5 951.5,249.5 952.5,250.5 962.5,250.5 962.5,249.5 964.5,250.5 968.5,250.5 969.5,239.5 970.5,243.5 971.5,250.5" fill="none" stroke="#0080ff" stroke-width="1" stroke-linejoin="miter" shape-rendering="crispEdges"/>
<polyline points="982.5,250.5 983.5,235.5 984.5,217.5 985.5,233.5 987.5,250.5 1032.5,250.5 1033.5,238.5 1035.5,229.5 1036.5,239.5 1037.5,250.5 1127.5,250.5 1127.5,248.5 1128.5,248.5 1128.5,249.5 1129.5,250.5 1174.5,250.5 1175.5,247.5 1176.5,246.5 1176.5,248.5 1177.5,250.5 1234.5,250.5 1234.5,249.5 1235.5,248.5 1235.5,249.5 1236.5,250.5 1253.5,250.5 1253.5,248.5 1254.5,247.5 1255.5,248.5 1256.5,250.5 1282.5,250.5 1282.5,247.5 1283.5,245.5 1284.5,247.5 1285.5,250.5 1297.5,250.5 1298.5,240.5 1299.5,235.5 1301.5,243.5 1302.5,250.5 1305.5,250.5 1306.5,248.5 1306.5,247.5 1307.5,248.5 1307.5,250.5 1331.5,250.5 1331.5,247.5 1332.5,244.5 1333.5,247.5 1334.5,250.5 1476.5,250.5 1477.5,249.5 1478.5,248.5 1478.5,249.5 1479.5,250.5 1514.5,250.5 1515.5,248.5 1515.5,247.5 1516.5,248.5 1516.5,250.5 1545.5,250.5 1547.5,241.5 1548.5,238.5 1550.5,246.5 1552.5,236.5 1553.5,231.5 1555.5,238.5 1557.5,243.5 1558.5,236.5 1560.5,241.5 1562.5,238.5 1564.5,244.5 1566.5,246.5 1568.5,250.5 1588.5,250.5 1589.5,240.5 1591.5,228.5 1592.5,222.5 1592.5,236.5" fill="none" stroke="#0080ff" stroke-width="1" stroke-linejoin="miter" shape-rendering="crispEdges"/>
<rect x="272" y="250" width="1623" height="1" fill="#000"/><text transform="translate(269,260) scale(0.2697,0.2500) rotate(0.05)" font-size="40" fill="#000" stroke="#000" stroke-width="0.5">0</text><rect x="320" y="246" width="1" height="4" fill="#808080"/><text transform="translate(317,260) scale(0.2697,0.2500) rotate(0.05)" font-size="40" fill="#000" stroke="#000" stroke-width="0.5">3</text><rect x="368" y="246" width="1" height="4" fill="#808080"/><text transform="translate(365,260) scale(0.2697,0.2500) rotate(0.05)" font-size="40" fill="#000" stroke="#000" stroke-width="0.5">6</text><rect x="416" y="246" width="1" height="4" fill="#808080"/><text transform="translate(413,260) scale(0.2697,0.2500) rotate(0.05)" font-size="40" fill="#000" stroke="#000" stroke-width="0.5">9</text><rect x="464" y="246" width="1" height="4" fill="#808080"/><text transform="translate(456.8,260) scale(0.2967,0.2500) rotate(0.05)" font-size="40" fill="#000" stroke="#000" stroke-width="0.5">12</text><rect x="512" y="246" width="1" height="4" fill="#808080"/><text transform="translate(504.8,260) scale(0.2967,0.2500) rotate(0.05)" font-size="40" fill="#000" stroke="#000" stroke-width="0.5">15</text><rect x="560" y="246" width="1" height="4" fill="#808080"/><text transform="translate(552.8,260) scale(0.2967,0.2500) rotate(0.05)" font-size="40" fill="#000" stroke="#000" stroke-width="0.5">18</text><rect x="608" y="246" width="1" height="4" fill="#808080"/><text transform="translate(600.8,260) scale(0.2967,0.2500) rotate(0.05)" font-size="40" fill="#000" stroke="#000" stroke-width="0.5">21</text><rect x="656" y="246" width="1" height="4" fill="#808080"/><text transform="translate(648.8,260) scale(0.2967,0.2500) rotate(0.05)" font-size="40" fill="#000" stroke="#000" stroke-width="0.5">24</text><rect x="704" y="246" width="1" height="4" fill="#808080"/><text transform="translate(696.8,260) scale(0.2967,0.2500) rotate(0.05)" font-size="40" fill="#000" stroke="#000" stroke-width="0.5">27</text><rect x="752" y="246" width="1" height="4" fill="#808080"/><text transform="translate(744.8,260) scale(0.2967,0.2500) rotate(0.05)" font-size="40" fill="#000" stroke="#000" stroke-width="0.5">30</text><rect x="800" y="246" width="1" height="4" fill="#808080"/><text transform="translate(792.8,260) scale(0.2967,0.2500) rotate(0.05)" font-size="40" fill="#000" stroke="#000" stroke-width="0.5">33</text><rect x="848" y="246" width="1" height="4" fill="#808080"/><text transform="translate(840.8,260) scale(0.2967,0.2500) rotate(0.05)" font-size="40" fill="#000" stroke="#000" stroke-width="0.5">36</text><rect x="896" y="246" width="1" height="4" fill="#808080"/><text transform="translate(888.8,260) scale(0.2967,0.2500) rotate(0.05)" font-size="40" fill="#000" stroke="#000" stroke-width="0.5">39</text><rect x="944" y="246" width="1" height="4" fill="#808080"/><text transform="translate(936.8,260) scale(0.2967,0.2500) rotate(0.05)" font-size="40" fill="#000" stroke="#000" stroke-width="0.5">42</text><rect x="992" y="246" width="1" height="4" fill="#808080"/><text transform="translate(984.8,260) scale(0.2967,0.2500) rotate(0.05)" font-size="40" fill="#000" stroke="#000" stroke-width="0.5">45</text><rect x="1040" y="246" width="1" height="4" fill="#808080"/><text transform="translate(1032.8,260) scale(0.2967,0.2500) rotate(0.05)" font-size="40" fill="#000" stroke="#000" stroke-width="0.5">48</text><rect x="1088" y="246" width="1" height="4" fill="#808080"/><text transform="translate(1080.8,260) scale(0.2967,0.2500) rotate(0.05)" font-size="40" fill="#000" stroke="#000" stroke-width="0.5">51</text><rect x="1136" y="246" width="1" height="4" fill="#808080"/><text transform="translate(1128.8,260) scale(0.2967,0.2500) rotate(0.05)" font-size="40" fill="#000" stroke="#000" stroke-width="0.5">54</text><rect x="1184" y="246" width="1" height="4" fill="#808080"/><text transform="translate(1176.8,260) scale(0.2967,0.2500) rotate(0.05)" font-size="40" fill="#000" stroke="#000" stroke-width="0.5">57</text><rect x="1232" y="246" width="1" height="4" fill="#808080"/><text transform="translate(1224.8,260) scale(0.2967,0.2500) rotate(0.05)" font-size="40" fill="#000" stroke="#000" stroke-width="0.5">60</text><rect x="1280" y="246" width="1" height="4" fill="#808080"/><text transform="translate(1272.8,260) scale(0.2967,0.2500) rotate(0.05)" font-size="40" fill="#000" stroke="#000" stroke-width="0.5">63</text><rect x="1328" y="246" width="1" height="4" fill="#808080"/><text transform="translate(1320.8,260) scale(0.2967,0.2500) rotate(0.05)" font-size="40" fill="#000" stroke="#000" stroke-width="0.5">66</text><rect x="1376" y="246" width="1" height="4" fill="#808080"/><text transform="translate(1368.8,260) scale(0.2967,0.2500) rotate(0.05)" font-size="40" fill="#000" stroke="#000" stroke-width="0.5">69</text><rect x="1424" y="246" width="1" height="4" fill="#808080"/><text transform="translate(1416.8,260) scale(0.2967,0.2500) rotate(0.05)" font-size="40" fill="#000" stroke="#000" stroke-width="0.5">72</text><rect x="1472" y="246" width="1" height="4" fill="#808080"/><text transform="translate(1464.8,260) scale(0.2967,0.2500) rotate(0.05)" font-size="40" fill="#000" stroke="#000" stroke-width="0.5">75</text><rect x="1520" y="246" width="1" height="4" fill="#808080"/><text transform="translate(1512.8,260) scale(0.2967,0.2500) rotate(0.05)" font-size="40" fill="#000" stroke="#000" stroke-width="0.5">78</text><rect x="1568" y="246" width="1" height="4" fill="#808080"/><text transform="translate(1560.8,260) scale(0.2967,0.2500) rotate(0.05)" font-size="40" fill="#000" stroke="#000" stroke-width="0.5">81</text>
<rect x="1824.5" y="103.5" width="65" height="30" fill="#fff" stroke="#000" stroke-width="1"/>
<rect x="1829" y="111" width="9" height="3" fill="#ff0000"/><rect x="1829" y="124" width="9" height="3" fill="#0080ff"/>
<text transform="translate(1844,116) scale(0.3268,0.2500) rotate(0.05)" font-size="40" fill="#000" stroke="#000" stroke-width="0.5">CPU 0</text>
<text transform="translate(1844,129) scale(0.3098,0.2500) rotate(0.05)" font-size="40" fill="#000" stroke="#000" stroke-width="0.5">CPU 1</text>
<rect x="272" y="320" width="1" height="130" fill="#000"/>
<text transform="translate(254.95,452) scale(0.2719,0.2500) rotate(0.05)" font-size="40" fill="#000" stroke="#000" stroke-width="0.5">0</text>
<rect x="273" y="431" width="4" height="1" fill="#808080"/>
<text transform="translate(242.05,434) scale(0.2839,0.2500) rotate(0.05)" font-size="40" fill="#000" stroke="#000" stroke-width="0.5">300</text>
<rect x="273" y="413" width="4" height="1" fill="#808080"/>
<text transform="translate(242.05,416) scale(0.2839,0.2500) rotate(0.05)" font-size="40" fill="#000" stroke="#000" stroke-width="0.5">600</text>
<rect x="273" y="395" width="4" height="1" fill="#808080"/>
<text transform="translate(242.05,398) scale(0.2839,0.2500) rotate(0.05)" font-size="40" fill="#000" stroke="#000" stroke-width="0.5">900</text>
<rect x="273" y="377" width="4" height="1" fill="#808080"/>
<text transform="translate(235.6,380) scale(0.2854,0.2500) rotate(0.05)" font-size="40" fill="#000" stroke="#000" stroke-width="0.5">1200</text>
<rect x="273" y="359" width="4" height="1" fill="#808080"/>
<text transform="translate(235.6,362) scale(0.2854,0.2500) rotate(0.05)" font-size="40" fill="#000" stroke="#000" stroke-width="0.5">1500</text>
<rect x="273" y="341" width="4" height="1" fill="#808080"/>
<text transform="translate(235.6,344) scale(0.2854,0.2500) rotate(0.05)" font-size="40" fill="#000" stroke="#000" stroke-width="0.5">1800</text>
<rect x="273" y="323" width="4" height="1" fill="#808080"/>
<text transform="translate(235.6,326) scale(0.2854,0.2500) rotate(0.05)" font-size="40" fill="#000" stroke="#000" stroke-width="0.5">2100</text>
<text transform="translate(233.5,315) scale(0.3288,0.2500) rotate(0.05)" font-size="40" fill="#000" stroke="#000" stroke-width="0.5">IO/sec</text>
<text transform="translate(292.5,315) scale(0.3311,0.2500) rotate(0.05)" font-size="40" fill="#ff0000" stroke="#ff0000" stroke-width="0.5">Warning!  Disk write caching is disabled.</text>
<rect x="774" y="320" width="2" height="129" fill="#a06466"/><rect x="770.5" y="312.5" width="9" height="7" fill="#a06466" stroke="#000" stroke-width="1"/>
<rect x="305" y="334" width="13" height="115" fill="#c83232"/>
<rect x="321" y="438" width="13" height="11" fill="#c83232"/>
<rect x="337" y="437" width="13" height="12" fill="#c83232"/>
<rect x="353" y="392" width="13" height="57" fill="#c83232"/>
<rect x="369" y="432" width="13" height="17" fill="#c83232"/>
<rect x="385" y="435" width="13" height="14" fill="#c83232"/>
<rect x="401" y="424" width="13" height="25" fill="#c83232"/>
<rect x="417" y="448" width="13" height="1" fill="#c83232"/>
<rect x="545" y="439" width="13" height="9" fill="#3030c8"/>
<rect x="545" y="448" width="13" height="1" fill="#c83232"/>
<rect x="561" y="443" width="13" height="5" fill="#3030c8"/>
<rect x="561" y="448" width="13" height="1" fill="#c83232"/>
<rect x="577" y="439" width="13" height="10" fill="#3030c8"/>
<rect x="593" y="441" width="13" height="8" fill="#3030c8"/>
<rect x="625" y="448" width="13" height="1" fill="#3030c8"/>
<rect x="641" y="447" width="13" height="2" fill="#3030c8"/>
<rect x="673" y="447" width="13" height="2" fill="#3030c8"/>
<rect x="689" y="438" width="13" height="9" fill="#3030c8"/>
<rect x="689" y="447" width="13" height="2" fill="#c83232"/>
<rect x="705" y="432" width="13" height="11" fill="#3030c8"/>
<rect x="705" y="443" width="13" height="6" fill="#c83232"/>
<rect x="721" y="444" width="13" height="5" fill="#3030c8"/>
<rect x="737" y="446" width="13" height="3" fill="#3030c8"/>
<rect x="753" y="438" width="13" height="10" fill="#3030c8"/>
<rect x="753" y="448" width="13" height="1" fill="#c83232"/>
<rect x="769" y="438" width="13" height="6" fill="#3030c8"/>
<rect x="769" y="444" width="13" height="5" fill="#c83232"/>
<rect x="785" y="435" width="13" height="9" fill="#3030c8"/>
<rect x="785" y="444" width="13" height="5" fill="#c83232"/>
<rect x="801" y="426" width="13" height="13" fill="#3030c8"/>
<rect x="801" y="439" width="13" height="10" fill="#c83232"/>
<rect x="817" y="419" width="13" height="14" fill="#3030c8"/>
<rect x="817" y="433" width="13" height="16" fill="#c83232"/>
<rect x="833" y="442" width="13" height="2" fill="#3030c8"/>
<rect x="833" y="444" width="13" height="5" fill="#c83232"/>
<rect x="849" y="437" width="13" height="2" fill="#3030c8"/>
<rect x="849" y="439" width="13" height="10" fill="#c83232"/>
<rect x="865" y="445" width="13" height="1" fill="#3030c8"/>
<rect x="865" y="446" width="13" height="3" fill="#c83232"/>
<rect x="881" y="445" width="13" height="1" fill="#3030c8"/>
<rect x="881" y="446" width="13" height="3" fill="#c83232"/>
<rect x="897" y="445" width="13" height="1" fill="#3030c8"/>
<rect x="897" y="446" width="13" height="3" fill="#c83232"/>
<rect x="913" y="444" width="13" height="5" fill="#c83232"/>
<rect x="945" y="444" width="13" height="5" fill="#3030c8"/>
<rect x="1233" y="448" width="13" height="1" fill="#3030c8"/>
<rect x="1537" y="446" width="13" height="3" fill="#c83232"/>
<rect x="1553" y="405" width="13" height="4" fill="#3030c8"/>
<rect x="1553" y="409" width="13" height="40" fill="#c83232"/>
<rect x="1585" y="448" width="13" height="1" fill="#c83232"/>
<rect x="272" y="449" width="1623" height="1" fill="#000"/><text transform="translate(269,459) scale(0.2697,0.2500) rotate(0.05)" font-size="40" fill="#000" stroke="#000" stroke-width="0.5">0</text><rect x="320" y="445" width="1" height="4" fill="#808080"/><text transform="translate(317,459) scale(0.2697,0.2500) rotate(0.05)" font-size="40" fill="#000" stroke="#000" stroke-width="0.5">3</text><rect x="368" y="445" width="1" height="4" fill="#808080"/><text transform="translate(365,459) scale(0.2697,0.2500) rotate(0.05)" font-size="40" fill="#000" stroke="#000" stroke-width="0.5">6</text><rect x="416" y="445" width="1" height="4" fill="#808080"/><text transform="translate(413,459) scale(0.2697,0.2500) rotate(0.05)" font-size="40" fill="#000" stroke="#000" stroke-width="0.5">9</text><rect x="464" y="445" width="1" height="4" fill="#808080"/><text transform="translate(456.8,459) scale(0.2967,0.2500) rotate(0.05)" font-size="40" fill="#000" stroke="#000" stroke-width="0.5">12</text><rect x="512" y="445" width="1" height="4" fill="#808080"/><text transform="translate(504.8,459) scale(0.2967,0.2500) rotate(0.05)" font-size="40" fill="#000" stroke="#000" stroke-width="0.5">15</text><rect x="560" y="445" width="1" height="4" fill="#808080"/><text transform="translate(552.8,459) scale(0.2967,0.2500) rotate(0.05)" font-size="40" fill="#000" stroke="#000" stroke-width="0.5">18</text><rect x="608" y="445" width="1" height="4" fill="#808080"/><text transform="translate(600.8,459) scale(0.2967,0.2500) rotate(0.05)" font-size="40" fill="#000" stroke="#000" stroke-width="0.5">21</text><rect x="656" y="445" width="1" height="4" fill="#808080"/><text transform="translate(648.8,459) scale(0.2967,0.2500) rotate(0.05)" font-size="40" fill="#000" stroke="#000" stroke-width="0.5">24</text><rect x="704" y="445" width="1" height="4" fill="#808080"/><text transform="translate(696.8,459) scale(0.2967,0.2500) rotate(0.05)" font-size="40" fill="#000" stroke="#000" stroke-width="0.5">27</text><rect x="752" y="445" width="1" height="4" fill="#808080"/><text transform="translate(744.8,459) scale(0.2967,0.2500) rotate(0.05)" font-size="40" fill="#000" stroke="#000" stroke-width="0.5">30</text><rect x="800" y="445" width="1" height="4" fill="#808080"/><text transform="translate(792.8,459) scale(0.2967,0.2500) rotate(0.05)" font-size="40" fill="#000" stroke="#000" stroke-width="0.5">33</text><rect x="848" y="445" width="1" height="4" fill="#808080"/><text transform="translate(840.8,459) scale(0.2967,0.2500) rotate(0.05)" font-size="40" fill="#000" stroke="#000" stroke-width="0.5">36</text><rect x="896" y="445" width="1" height="4" fill="#808080"/><text transform="translate(888.8,459) scale(0.2967,0.2500) rotate(0.05)" font-size="40" fill="#000" stroke="#000" stroke-width="0.5">39</text><rect x="944" y="445" width="1" height="4" fill="#808080"/><text transform="translate(936.8,459) scale(0.2967,0.2500) rotate(0.05)" font-size="40" fill="#000" stroke="#000" stroke-width="0.5">42</text><rect x="992" y="445" width="1" height="4" fill="#808080"/><text transform="translate(984.8,459) scale(0.2967,0.2500) rotate(0.05)" font-size="40" fill="#000" stroke="#000" stroke-width="0.5">45</text><rect x="1040" y="445" width="1" height="4" fill="#808080"/><text transform="translate(1032.8,459) scale(0.2967,0.2500) rotate(0.05)" font-size="40" fill="#000" stroke="#000" stroke-width="0.5">48</text><rect x="1088" y="445" width="1" height="4" fill="#808080"/><text transform="translate(1080.8,459) scale(0.2967,0.2500) rotate(0.05)" font-size="40" fill="#000" stroke="#000" stroke-width="0.5">51</text><rect x="1136" y="445" width="1" height="4" fill="#808080"/><text transform="translate(1128.8,459) scale(0.2967,0.2500) rotate(0.05)" font-size="40" fill="#000" stroke="#000" stroke-width="0.5">54</text><rect x="1184" y="445" width="1" height="4" fill="#808080"/><text transform="translate(1176.8,459) scale(0.2967,0.2500) rotate(0.05)" font-size="40" fill="#000" stroke="#000" stroke-width="0.5">57</text><rect x="1232" y="445" width="1" height="4" fill="#808080"/><text transform="translate(1224.8,459) scale(0.2967,0.2500) rotate(0.05)" font-size="40" fill="#000" stroke="#000" stroke-width="0.5">60</text><rect x="1280" y="445" width="1" height="4" fill="#808080"/><text transform="translate(1272.8,459) scale(0.2967,0.2500) rotate(0.05)" font-size="40" fill="#000" stroke="#000" stroke-width="0.5">63</text><rect x="1328" y="445" width="1" height="4" fill="#808080"/><text transform="translate(1320.8,459) scale(0.2967,0.2500) rotate(0.05)" font-size="40" fill="#000" stroke="#000" stroke-width="0.5">66</text><rect x="1376" y="445" width="1" height="4" fill="#808080"/><text transform="translate(1368.8,459) scale(0.2967,0.2500) rotate(0.05)" font-size="40" fill="#000" stroke="#000" stroke-width="0.5">69</text><rect x="1424" y="445" width="1" height="4" fill="#808080"/><text transform="translate(1416.8,459) scale(0.2967,0.2500) rotate(0.05)" font-size="40" fill="#000" stroke="#000" stroke-width="0.5">72</text><rect x="1472" y="445" width="1" height="4" fill="#808080"/><text transform="translate(1464.8,459) scale(0.2967,0.2500) rotate(0.05)" font-size="40" fill="#000" stroke="#000" stroke-width="0.5">75</text><rect x="1520" y="445" width="1" height="4" fill="#808080"/><text transform="translate(1512.8,459) scale(0.2967,0.2500) rotate(0.05)" font-size="40" fill="#000" stroke="#000" stroke-width="0.5">78</text><rect x="1568" y="445" width="1" height="4" fill="#808080"/><text transform="translate(1560.8,459) scale(0.2967,0.2500) rotate(0.05)" font-size="40" fill="#000" stroke="#000" stroke-width="0.5">81</text>
<rect x="1796.5" y="303.5" width="93" height="30" fill="#fff" stroke="#000" stroke-width="1"/>
<rect x="1802.5" y="309.5" width="7" height="7" fill="#c83232" stroke="#000"/><rect x="1802.5" y="322.5" width="7" height="7" fill="#3030c8" stroke="#000"/>
<text transform="translate(1815.5,316) scale(0.3333,0.2500) rotate(0.05)" font-size="40" fill="#000" stroke="#000" stroke-width="0.5">Disk Read</text>
<text transform="translate(1815.5,329) scale(0.3389,0.2500) rotate(0.05)" font-size="40" fill="#000" stroke="#000" stroke-width="0.5">Disk Write</text>
<rect x="272" y="519" width="1" height="130" fill="#000"/>
<text transform="translate(254.95,651) scale(0.2719,0.2500) rotate(0.05)" font-size="40" fill="#000" stroke="#000" stroke-width="0.5">0</text>
<rect x="273" y="624" width="4" height="1" fill="#808080"/>
<text transform="translate(248.5,627) scale(0.2809,0.2500) rotate(0.05)" font-size="40" fill="#000" stroke="#000" stroke-width="0.5">20</text>
<rect x="273" y="600" width="4" height="1" fill="#808080"/>
<text transform="translate(248.5,603) scale(0.2809,0.2500) rotate(0.05)" font-size="40" fill="#000" stroke="#000" stroke-width="0.5">40</text>
<rect x="273" y="576" width="4" height="1" fill="#808080"/>
<text transform="translate(248.5,579) scale(0.2809,0.2500) rotate(0.05)" font-size="40" fill="#000" stroke="#000" stroke-width="0.5">60</text>
<rect x="273" y="552" width="4" height="1" fill="#808080"/>
<text transform="translate(248.5,555) scale(0.2809,0.2500) rotate(0.05)" font-size="40" fill="#000" stroke="#000" stroke-width="0.5">80</text>
<rect x="273" y="528" width="4" height="1" fill="#808080"/>
<text transform="translate(242.05,531) scale(0.2839,0.2500) rotate(0.05)" font-size="40" fill="#000" stroke="#000" stroke-width="0.5">100</text>
<text transform="translate(219,514) scale(0.3235,0.2500) rotate(0.05)" font-size="40" fill="#000" stroke="#000" stroke-width="0.5">% Usage</text>
<rect x="774" y="519" width="2" height="129" fill="#a06466"/><rect x="770.5" y="511.5" width="9" height="7" fill="#a06466" stroke="#000" stroke-width="1"/>
<polyline points="307.5,648.5 307.5,597.5 308.5,596.5 308.5,545.5 309.5,566.5 309.5,553.5 309.5,567.5 310.5,573.5 312.5,573.5 312.5,607.5 313.5,608.5 313.5,640.5 314.5,635.5 314.5,627.5 315.5,623.5 316.5,619.5 316.5,604.5 317.5,602.5 317.5,576.5 318.5,555.5 319.5,541.5 319.5,545.5 320.5,533.5 321.5,554.5 321.5,540.5 322.5,548.5 323.5,539.5 323.5,534.5 324.5,540.5 325.5,536.5 326.5,530.5 327.5,530.5 329.5,532.5 331.5,534.5 334.5,531.5 336.5,531.5 338.5,531.5 340.5,532.5 342.5,531.5 344.5,530.5 345.5,537.5 346.5,533.5 347.5,531.5 348.5,533.5 350.5,531.5 352.5,533.5 353.5,531.5 354.5,536.5 356.5,542.5 356.5,547.5 357.5,553.5 357.5,558.5 358.5,563.5 358.5,549.5 360.5,547.5 360.5,542.5 361.5,540.5 361.5,558.5 362.5,591.5 362.5,568.5 363.5,608.5 363.5,568.5 364.5,567.5 364.5,528.5 377.5,528.5 377.5,534.5 378.5,540.5 378.5,553.5 379.5,562.5 380.5,545.5 380.5,544.5 380.5,528.5 388.5,528.5 388.5,558.5 389.5,559.5 389.5,618.5 390.5,619.5 390.5,648.5 390.5,618.5 391.5,617.5 391.5,558.5 392.5,557.5 392.5,528.5 420.5,528.5 420.5,550.5 421.5,551.5 421.5,594.5 422.5,596.5 423.5,624.5 423.5,625.5 424.5,641.5 424.5,642.5 424.5,648.5 548.5,648.5 548.5,639.5 549.5,619.5 550.5,596.5 551.5,593.5 551.5,568.5 552.5,567.5 552.5,542.5 553.5,540.5 553.5,528.5 555.5,528.5 555.5,576.5 556.5,577.5 556.5,623.5 557.5,614.5 557.5,613.5 558.5,590.5 559.5,549.5 560.5,528.5 560.5,528.5 560.5,556.5 561.5,558.5 561.5,590.5 562.5,602.5 563.5,614.5 564.5,624.5 565.5,632.5 566.5,644.5 566.5,639.5 567.5,635.5 568.5,596.5 569.5,593.5 569.5,562.5 570.5,571.5 570.5,586.5 571.5,587.5 571.5,617.5 572.5,619.5 572.5,641.5 573.5,611.5 574.5,610.5 574.5,600.5 574.5,613.5 575.5,632.5 576.5,639.5 577.5,648.5 577.5,636.5 578.5,611.5 579.5,608.5 579.5,563.5 580.5,562.5 580.5,528.5 581.5,540.5 581.5,539.5 581.5,562.5 582.5,562.5 582.5,590.5 583.5,592.5 584.5,627.5 584.5,633.5 585.5,645.5 586.5,644.5 587.5,644.5 587.5,642.5 589.5,643.5 590.5,644.5 591.5,641.5 592.5,601.5 592.5,599.5 593.5,560.5 593.5,580.5 594.5,581.5 594.5,619.5 595.5,620.5 596.5,648.5 596.5,627.5 597.5,602.5 598.5,601.5 598.5,588.5 598.5,601.5 599.5,602.5 600.5,626.5 600.5,627.5 601.5,644.5 602.5,647.5 604.5,647.5 605.5,648.5 606.5,647.5 608.5,644.5 609.5,647.5 610.5,648.5 622.5,648.5 624.5,644.5 626.5,648.5 638.5,648.5 641.5,640.5 643.5,648.5 654.5,648.5 656.5,640.5 656.5,648.5 657.5,644.5 657.5,648.5 670.5,648.5 672.5,644.5 673.5,648.5 680.5,648.5 681.5,642.5 682.5,632.5 683.5,627.5 683.5,637.5 684.5,633.5 685.5,605.5 686.5,604.5 686.5,590.5 687.5,602.5 687.5,602.5 688.5,582.5 688.5,580.5 689.5,528.5 689.5,528.5 689.5,582.5 690.5,550.5 690.5,593.5 691.5,616.5 691.5,528.5 692.5,528.5 692.5,571.5 692.5,545.5 693.5,576.5 694.5,592.5 694.5,576.5 695.5,574.5 695.5,545.5 696.5,543.5 696.5,528.5 699.5,528.5 699.5,589.5 700.5,590.5 700.5,648.5 701.5,593.5 701.5,557.5 702.5,556.5 702.5,528.5 704.5,528.5 704.5,542.5 705.5,542.5 705.5,555.5 706.5,551.5 707.5,552.5 707.5,599.5 708.5,601.5 708.5,648.5 709.5,593.5 710.5,592.5 710.5,562.5 711.5,561.5 711.5,540.5 712.5,539.5 712.5,528.5 715.5,528.5 715.5,589.5 716.5,590.5 716.5,648.5 717.5,635.5 718.5,633.5 718.5,629.5 719.5,632.5 720.5,633.5 721.5,642.5 722.5,627.5 723.5,619.5 724.5,618.5 725.5,623.5 726.5,632.5 727.5,642.5 728.5,647.5 730.5,648.5 732.5,646.5 734.5,647.5 735.5,644.5 736.5,636.5 736.5,585.5 737.5,584.5 737.5,528.5 739.5,531.5 739.5,532.5 740.5,585.5 741.5,586.5 741.5,644.5 742.5,645.5 742.5,645.5 743.5,648.5 750.5,648.5 752.5,644.5 753.5,648.5 756.5,646.5 757.5,648.5 758.5,622.5 759.5,620.5 759.5,565.5 760.5,564.5 760.5,533.5 761.5,528.5 761.5,530.5 763.5,532.5 763.5,589.5 764.5,592.5 764.5,644.5 764.5,645.5 765.5,642.5 766.5,613.5 766.5,612.5 767.5,557.5 768.5,556.5 768.5,528.5 770.5,530.5 772.5,528.5 792.5,528.5 792.5,587.5 793.5,589.5 793.5,648.5 794.5,648.5 795.5,588.5 795.5,587.5 796.5,528.5 803.5,528.5 803.5,588.5 803.5,589.5 804.5,648.5 805.5,648.5 805.5,617.5 805.5,616.5 805.5,557.5 806.5,556.5 806.5,528.5 811.5,528.5 811.5,588.5 812.5,589.5 812.5,648.5 813.5,617.5 813.5,618.5 813.5,558.5 814.5,557.5 814.5,528.5 814.5,559.5 815.5,559.5 815.5,618.5 816.5,619.5 816.5,648.5 816.5,587.5 817.5,587.5 817.5,528.5 824.5,528.5 825.5,532.5 827.5,528.5 841.5,528.5 841.5,558.5 842.5,559.5 842.5,619.5 843.5,619.5 843.5,648.5 843.5,588.5 844.5,587.5 844.5,528.5 856.5,528.5 858.5,531.5 859.5,536.5 860.5,559.5 860.5,561.5 861.5,587.5 861.5,598.5 862.5,602.5 862.5,585.5 863.5,583.5 863.5,547.5 864.5,546.5 864.5,528.5 873.5,528.5 873.5,536.5 874.5,537.5 874.5,549.5 875.5,557.5 875.5,543.5 876.5,542.5 876.5,528.5 915.5,528.5 916.5,536.5 917.5,538.5 918.5,536.5 919.5,539.5 921.5,542.5 922.5,537.5 923.5,536.5 923.5,555.5 924.5,556.5 924.5,593.5 925.5,593.5 925.5,628.5 926.5,629.5 926.5,648.5 928.5,642.5 929.5,639.5 930.5,644.5 931.5,648.5 941.5,648.5 944.5,644.5 944.5,635.5 945.5,627.5 946.5,633.5 947.5,639.5 947.5,648.5 948.5,642.5 949.5,628.5 950.5,627.5 950.5,620.5 950.5,627.5 951.5,629.5 951.5,642.5 952.5,642.5 952.5,648.5 957.5,648.5 959.5,644.5 961.5,648.5 969.5,648.5 972.5,648.5 975.5,644.5 976.5,642.5 977.5,647.5 978.5,648.5 982.5,648.5 983.5,648.5 983.5,636.5 984.5,634.5 985.5,624.5 986.5,632.5 986.5,631.5 987.5,643.5 988.5,643.5 988.5,648.5 990.5,648.5 992.5,642.5 992.5,645.5 994.5,648.5 1006.5,648.5 1007.5,640.5 1008.5,644.5 1010.5,648.5 1022.5,648.5 1022.5,642.5 1023.5,641.5 1023.5,630.5 1024.5,621.5 1025.5,634.5 1025.5,635.5 1026.5,648.5 1038.5,648.5 1039.5,640.5 1040.5,644.5 1042.5,648.5 1054.5,648.5 1055.5,639.5 1056.5,643.5 1058.5,648.5 1070.5,648.5 1071.5,643.5 1072.5,645.5 1074.5,648.5 1086.5,648.5 1087.5,643.5 1088.5,645.5 1090.5,648.5 1102.5,648.5 1103.5,642.5 1104.5,645.5 1106.5,648.5 1118.5,648.5 1119.5,643.5 1120.5,645.5 1122.5,648.5 1134.5,648.5 1135.5,642.5 1136.5,645.5 1138.5,648.5 1150.5,648.5 1151.5,643.5 1152.5,645.5 1154.5,648.5 1182.5,648.5 1183.5,643.5 1184.5,645.5 1186.5,648.5 1198.5,648.5 1199.5,643.5 1200.5,645.5 1202.5,648.5 1214.5,648.5 1215.5,642.5 1216.5,645.5 1218.5,648.5 1230.5,648.5 1231.5,643.5 1232.5,645.5 1234.5,648.5 1246.5,648.5 1247.5,642.5 1248.5,645.5 1250.5,648.5 1252.5,648.5 1254.5,645.5 1256.5,648.5 1262.5,648.5 1262.5,635.5 1263.5,634.5 1263.5,608.5 1264.5,594.5 1265.5,622.5 1265.5,623.5 1265.5,648.5 1278.5,648.5 1279.5,643.5 1280.5,645.5 1282.5,648.5 1294.5,648.5 1296.5,642.5 1297.5,636.5 1297.5,635.5 1298.5,607.5 1299.5,593.5 1300.5,621.5 1300.5,622.5 1301.5,648.5 1310.5,648.5 1311.5,643.5 1312.5,645.5 1314.5,648.5 1326.5,648.5 1327.5,643.5 1328.5,645.5 1330.5,648.5 1342.5,648.5 1343.5,643.5 1344.5,645.5 1346.5,648.5 1358.5,648.5 1359.5,640.5 1360.5,644.5 1362.5,648.5 1374.5,648.5 1375.5,641.5 1376.5,644.5 1378.5,648.5 1390.5,648.5 1391.5,643.5 1392.5,645.5 1394.5,648.5 1406.5,648.5 1407.5,641.5 1408.5,644.5 1410.5,648.5 1422.5,648.5 1423.5,643.5 1424.5,645.5 1426.5,648.5 1438.5,648.5 1439.5,641.5 1440.5,644.5 1442.5,648.5 1454.5,648.5 1455.5,640.5 1456.5,644.5 1458.5,648.5 1470.5,648.5 1471.5,643.5 1472.5,645.5 1474.5,648.5 1486.5,648.5 1487.5,643.5 1488.5,645.5 1490.5,648.5 1502.5,648.5 1503.5,643.5 1504.5,645.5 1506.5,648.5 1518.5,648.5 1519.5,643.5 1520.5,645.5 1522.5,648.5 1512.5,648.5 1514.5,641.5 1515.5,635.5 1515.5,642.5 1516.5,648.5 1518.5,648.5 1519.5,644.5 1520.5,639.5 1521.5,644.5 1521.5,648.5 1534.5,648.5 1535.5,644.5 1536.5,641.5 1537.5,648.5 1538.5,648.5 1539.5,636.5 1539.5,635.5 1540.5,623.5 1540.5,630.5 1541.5,630.5 1542.5,641.5 1542.5,642.5 1542.5,648.5 1545.5,648.5 1545.5,633.5 1546.5,632.5 1546.5,601.5 1547.5,599.5 1547.5,573.5 1548.5,571.5 1548.5,556.5 1549.5,549.5 1550.5,542.5 1551.5,533.5 1551.5,539.5 1552.5,528.5 1552.5,547.5 1553.5,549.5 1553.5,568.5 1554.5,565.5 1556.5,564.5 1556.5,556.5 1557.5,546.5 1558.5,539.5 1559.5,540.5 1560.5,546.5 1561.5,547.5 1561.5,550.5 1562.5,534.5 1562.5,533.5 1563.5,528.5 1563.5,534.5 1564.5,536.5 1564.5,566.5 1565.5,567.5 1565.5,616.5 1566.5,616.5 1566.5,641.5 1567.5,627.5 1567.5,604.5 1568.5,602.5 1568.5,591.5 1568.5,619.5 1569.5,620.5 1569.5,648.5 1582.5,648.5 1583.5,642.5 1584.5,640.5 1585.5,644.5 1585.5,648.5 1587.5,648.5 1588.5,618.5 1589.5,617.5 1589.5,557.5 1590.5,556.5 1590.5,528.5 1591.5,528.5" fill="none" stroke="#6b6a2c" stroke-width="1" stroke-linejoin="miter" shape-rendering="crispEdges"/>
<rect x="272" y="648" width="1623" height="1" fill="#000"/><text transform="translate(269,658) scale(0.2697,0.2500) rotate(0.05)" font-size="40" fill="#000" stroke="#000" stroke-width="0.5">0</text><rect x="320" y="644" width="1" height="4" fill="#808080"/><text transform="translate(317,658) scale(0.2697,0.2500) rotate(0.05)" font-size="40" fill="#000" stroke="#000" stroke-width="0.5">3</text><rect x="368" y="644" width="1" height="4" fill="#808080"/><text transform="translate(365,658) scale(0.2697,0.2500) rotate(0.05)" font-size="40" fill="#000" stroke="#000" stroke-width="0.5">6</text><rect x="416" y="644" width="1" height="4" fill="#808080"/><text transform="translate(413,658) scale(0.2697,0.2500) rotate(0.05)" font-size="40" fill="#000" stroke="#000" stroke-width="0.5">9</text><rect x="464" y="644" width="1" height="4" fill="#808080"/><text transform="translate(456.8,658) scale(0.2967,0.2500) rotate(0.05)" font-size="40" fill="#000" stroke="#000" stroke-width="0.5">12</text><rect x="512" y="644" width="1" height="4" fill="#808080"/><text transform="translate(504.8,658) scale(0.2967,0.2500) rotate(0.05)" font-size="40" fill="#000" stroke="#000" stroke-width="0.5">15</text><rect x="560" y="644" width="1" height="4" fill="#808080"/><text transform="translate(552.8,658) scale(0.2967,0.2500) rotate(0.05)" font-size="40" fill="#000" stroke="#000" stroke-width="0.5">18</text><rect x="608" y="644" width="1" height="4" fill="#808080"/><text transform="translate(600.8,658) scale(0.2967,0.2500) rotate(0.05)" font-size="40" fill="#000" stroke="#000" stroke-width="0.5">21</text><rect x="656" y="644" width="1" height="4" fill="#808080"/><text transform="translate(648.8,658) scale(0.2967,0.2500) rotate(0.05)" font-size="40" fill="#000" stroke="#000" stroke-width="0.5">24</text><rect x="704" y="644" width="1" height="4" fill="#808080"/><text transform="translate(696.8,658) scale(0.2967,0.2500) rotate(0.05)" font-size="40" fill="#000" stroke="#000" stroke-width="0.5">27</text><rect x="752" y="644" width="1" height="4" fill="#808080"/><text transform="translate(744.8,658) scale(0.2967,0.2500) rotate(0.05)" font-size="40" fill="#000" stroke="#000" stroke-width="0.5">30</text><rect x="800" y="644" width="1" height="4" fill="#808080"/><text transform="translate(792.8,658) scale(0.2967,0.2500) rotate(0.05)" font-size="40" fill="#000" stroke="#000" stroke-width="0.5">33</text><rect x="848" y="644" width="1" height="4" fill="#808080"/><text transform="translate(840.8,658) scale(0.2967,0.2500) rotate(0.05)" font-size="40" fill="#000" stroke="#000" stroke-width="0.5">36</text><rect x="896" y="644" width="1" height="4" fill="#808080"/><text transform="translate(888.8,658) scale(0.2967,0.2500) rotate(0.05)" font-size="40" fill="#000" stroke="#000" stroke-width="0.5">39</text><rect x="944" y="644" width="1" height="4" fill="#808080"/><text transform="translate(936.8,658) scale(0.2967,0.2500) rotate(0.05)" font-size="40" fill="#000" stroke="#000" stroke-width="0.5">42</text><rect x="992" y="644" width="1" height="4" fill="#808080"/><text transform="translate(984.8,658) scale(0.2967,0.2500) rotate(0.05)" font-size="40" fill="#000" stroke="#000" stroke-width="0.5">45</text><rect x="1040" y="644" width="1" height="4" fill="#808080"/><text transform="translate(1032.8,658) scale(0.2967,0.2500) rotate(0.05)" font-size="40" fill="#000" stroke="#000" stroke-width="0.5">48</text><rect x="1088" y="644" width="1" height="4" fill="#808080"/><text transform="translate(1080.8,658) scale(0.2967,0.2500) rotate(0.05)" font-size="40" fill="#000" stroke="#000" stroke-width="0.5">51</text><rect x="1136" y="644" width="1" height="4" fill="#808080"/><text transform="translate(1128.8,658) scale(0.2967,0.2500) rotate(0.05)" font-size="40" fill="#000" stroke="#000" stroke-width="0.5">54</text><rect x="1184" y="644" width="1" height="4" fill="#808080"/><text transform="translate(1176.8,658) scale(0.2967,0.2500) rotate(0.05)" font-size="40" fill="#000" stroke="#000" stroke-width="0.5">57</text><rect x="1232" y="644" width="1" height="4" fill="#808080"/><text transform="translate(1224.8,658) scale(0.2967,0.2500) rotate(0.05)" font-size="40" fill="#000" stroke="#000" stroke-width="0.5">60</text><rect x="1280" y="644" width="1" height="4" fill="#808080"/><text transform="translate(1272.8,658) scale(0.2967,0.2500) rotate(0.05)" font-size="40" fill="#000" stroke="#000" stroke-width="0.5">63</text><rect x="1328" y="644" width="1" height="4" fill="#808080"/><text transform="translate(1320.8,658) scale(0.2967,0.2500) rotate(0.05)" font-size="40" fill="#000" stroke="#000" stroke-width="0.5">66</text><rect x="1376" y="644" width="1" height="4" fill="#808080"/><text transform="translate(1368.8,658) scale(0.2967,0.2500) rotate(0.05)" font-size="40" fill="#000" stroke="#000" stroke-width="0.5">69</text><rect x="1424" y="644" width="1" height="4" fill="#808080"/><text transform="translate(1416.8,658) scale(0.2967,0.2500) rotate(0.05)" font-size="40" fill="#000" stroke="#000" stroke-width="0.5">72</text><rect x="1472" y="644" width="1" height="4" fill="#808080"/><text transform="translate(1464.8,658) scale(0.2967,0.2500) rotate(0.05)" font-size="40" fill="#000" stroke="#000" stroke-width="0.5">75</text><rect x="1520" y="644" width="1" height="4" fill="#808080"/><text transform="translate(1512.8,658) scale(0.2967,0.2500) rotate(0.05)" font-size="40" fill="#000" stroke="#000" stroke-width="0.5">78</text><rect x="1568" y="644" width="1" height="4" fill="#808080"/><text transform="translate(1560.8,658) scale(0.2967,0.2500) rotate(0.05)" font-size="40" fill="#000" stroke="#000" stroke-width="0.5">81</text>
<rect x="1798.5" y="502.5" width="91" height="30" fill="#fff" stroke="#000" stroke-width="1"/>
<rect x="1803" y="510" width="9" height="3" fill="#6b6a2c"/><rect x="1803" y="523" width="9" height="3" fill="#ff00ff"/>
<text transform="translate(1817.5,515) scale(0.3348,0.2500) rotate(0.05)" font-size="40" fill="#000" stroke="#000" stroke-width="0.5">Disk 0 (E:)</text>
<text transform="translate(1817.5,528) scale(0.3319,0.2500) rotate(0.05)" font-size="40" fill="#000" stroke="#000" stroke-width="0.5">Disk 1 )</text>
<rect x="272" y="718" width="1" height="130" fill="#000"/>
<rect x="273" y="727" width="4" height="1" fill="#808080"/>
<rect x="273" y="747" width="4" height="1" fill="#808080"/>
<rect x="273" y="767" width="4" height="1" fill="#808080"/>
<rect x="273" y="787" width="4" height="1" fill="#808080"/>
<rect x="273" y="807" width="4" height="1" fill="#808080"/>
<rect x="273" y="827" width="4" height="1" fill="#808080"/>
<text transform="translate(224.5,713) scale(0.3287,0.2500) rotate(0.05)" font-size="40" fill="#000" stroke="#000" stroke-width="0.5">Process</text>
<rect x="272" y="847" width="1606" height="1" fill="#000"/><text transform="translate(269,857) scale(0.2697,0.2500) rotate(0.05)" font-size="40" fill="#000" stroke="#000" stroke-width="0.5">0</text><rect x="320" y="843" width="1" height="4" fill="#808080"/><text transform="translate(317,857) scale(0.2697,0.2500) rotate(0.05)" font-size="40" fill="#000" stroke="#000" stroke-width="0.5">3</text><rect x="368" y="843" width="1" height="4" fill="#808080"/><text transform="translate(365,857) scale(0.2697,0.2500) rotate(0.05)" font-size="40" fill="#000" stroke="#000" stroke-width="0.5">6</text><rect x="416" y="843" width="1" height="4" fill="#808080"/><text transform="translate(413,857) scale(0.2697,0.2500) rotate(0.05)" font-size="40" fill="#000" stroke="#000" stroke-width="0.5">9</text><rect x="464" y="843" width="1" height="4" fill="#808080"/><text transform="translate(456.8,857) scale(0.2967,0.2500) rotate(0.05)" font-size="40" fill="#000" stroke="#000" stroke-width="0.5">12</text><rect x="512" y="843" width="1" height="4" fill="#808080"/><text transform="translate(504.8,857) scale(0.2967,0.2500) rotate(0.05)" font-size="40" fill="#000" stroke="#000" stroke-width="0.5">15</text><rect x="560" y="843" width="1" height="4" fill="#808080"/><text transform="translate(552.8,857) scale(0.2967,0.2500) rotate(0.05)" font-size="40" fill="#000" stroke="#000" stroke-width="0.5">18</text><rect x="608" y="843" width="1" height="4" fill="#808080"/><text transform="translate(600.8,857) scale(0.2967,0.2500) rotate(0.05)" font-size="40" fill="#000" stroke="#000" stroke-width="0.5">21</text><rect x="656" y="843" width="1" height="4" fill="#808080"/><text transform="translate(648.8,857) scale(0.2967,0.2500) rotate(0.05)" font-size="40" fill="#000" stroke="#000" stroke-width="0.5">24</text><rect x="704" y="843" width="1" height="4" fill="#808080"/><text transform="translate(696.8,857) scale(0.2967,0.2500) rotate(0.05)" font-size="40" fill="#000" stroke="#000" stroke-width="0.5">27</text><rect x="752" y="843" width="1" height="4" fill="#808080"/><text transform="translate(744.8,857) scale(0.2967,0.2500) rotate(0.05)" font-size="40" fill="#000" stroke="#000" stroke-width="0.5">30</text><rect x="800" y="843" width="1" height="4" fill="#808080"/><text transform="translate(792.8,857) scale(0.2967,0.2500) rotate(0.05)" font-size="40" fill="#000" stroke="#000" stroke-width="0.5">33</text><rect x="848" y="843" width="1" height="4" fill="#808080"/><text transform="translate(840.8,857) scale(0.2967,0.2500) rotate(0.05)" font-size="40" fill="#000" stroke="#000" stroke-width="0.5">36</text><rect x="896" y="843" width="1" height="4" fill="#808080"/><text transform="translate(888.8,857) scale(0.2967,0.2500) rotate(0.05)" font-size="40" fill="#000" stroke="#000" stroke-width="0.5">39</text><rect x="944" y="843" width="1" height="4" fill="#808080"/><text transform="translate(936.8,857) scale(0.2967,0.2500) rotate(0.05)" font-size="40" fill="#000" stroke="#000" stroke-width="0.5">42</text><rect x="992" y="843" width="1" height="4" fill="#808080"/><text transform="translate(984.8,857) scale(0.2967,0.2500) rotate(0.05)" font-size="40" fill="#000" stroke="#000" stroke-width="0.5">45</text><rect x="1040" y="843" width="1" height="4" fill="#808080"/><text transform="translate(1032.8,857) scale(0.2967,0.2500) rotate(0.05)" font-size="40" fill="#000" stroke="#000" stroke-width="0.5">48</text><rect x="1088" y="843" width="1" height="4" fill="#808080"/><text transform="translate(1080.8,857) scale(0.2967,0.2500) rotate(0.05)" font-size="40" fill="#000" stroke="#000" stroke-width="0.5">51</text><rect x="1136" y="843" width="1" height="4" fill="#808080"/><text transform="translate(1128.8,857) scale(0.2967,0.2500) rotate(0.05)" font-size="40" fill="#000" stroke="#000" stroke-width="0.5">54</text><rect x="1184" y="843" width="1" height="4" fill="#808080"/><text transform="translate(1176.8,857) scale(0.2967,0.2500) rotate(0.05)" font-size="40" fill="#000" stroke="#000" stroke-width="0.5">57</text><rect x="1232" y="843" width="1" height="4" fill="#808080"/><text transform="translate(1224.8,857) scale(0.2967,0.2500) rotate(0.05)" font-size="40" fill="#000" stroke="#000" stroke-width="0.5">60</text><rect x="1280" y="843" width="1" height="4" fill="#808080"/><text transform="translate(1272.8,857) scale(0.2967,0.2500) rotate(0.05)" font-size="40" fill="#000" stroke="#000" stroke-width="0.5">63</text><rect x="1328" y="843" width="1" height="4" fill="#808080"/><text transform="translate(1320.8,857) scale(0.2967,0.2500) rotate(0.05)" font-size="40" fill="#000" stroke="#000" stroke-width="0.5">66</text><rect x="1376" y="843" width="1" height="4" fill="#808080"/><text transform="translate(1368.8,857) scale(0.2967,0.2500) rotate(0.05)" font-size="40" fill="#000" stroke="#000" stroke-width="0.5">69</text><rect x="1424" y="843" width="1" height="4" fill="#808080"/><text transform="translate(1416.8,857) scale(0.2967,0.2500) rotate(0.05)" font-size="40" fill="#000" stroke="#000" stroke-width="0.5">72</text><rect x="1472" y="843" width="1" height="4" fill="#808080"/><text transform="translate(1464.8,857) scale(0.2967,0.2500) rotate(0.05)" font-size="40" fill="#000" stroke="#000" stroke-width="0.5">75</text><rect x="1520" y="843" width="1" height="4" fill="#808080"/><text transform="translate(1512.8,857) scale(0.2967,0.2500) rotate(0.05)" font-size="40" fill="#000" stroke="#000" stroke-width="0.5">78</text><rect x="1568" y="843" width="1" height="4" fill="#808080"/><text transform="translate(1560.8,857) scale(0.2967,0.2500) rotate(0.05)" font-size="40" fill="#000" stroke="#000" stroke-width="0.5">81</text>
<text transform="translate(782,740) scale(0.3164,0.2500) rotate(0.05)" font-size="40" fill="#000" stroke="#000" stroke-width="0.5">rthdcpl.exe(1800)</text>
<text transform="translate(766.5,760) scale(0.3148,0.2500) rotate(0.05)" font-size="40" fill="#000" stroke="#000" stroke-width="0.5">googlecrashhand(776)</text>
<text transform="translate(766,780) scale(0.3234,0.2500) rotate(0.05)" font-size="40" fill="#000" stroke="#000" stroke-width="0.5">wuauclt.exe(936)</text>
<text transform="translate(766.5,800) scale(0.3147,0.2500) rotate(0.05)" font-size="40" fill="#000" stroke="#000" stroke-width="0.5">googleupdate.ex(952)</text>
<text transform="translate(746.5,820) scale(0.3226,0.2500) rotate(0.05)" font-size="40" fill="#000" stroke="#000" stroke-width="0.5">wmiprvse.exe(656)</text>
<text transform="translate(742.5,840) scale(0.3180,0.2500) rotate(0.05)" font-size="40" fill="#000" stroke="#000" stroke-width="0.5">explorer.exe(248)</text>
<text transform="translate(1288.5,840) scale(0.3170,0.2500) rotate(0.05)" font-size="40" fill="#000" stroke="#000" stroke-width="0.5">reader_sl.exe(2880)</text>
<text transform="translate(1596.5,840) scale(0.3208,0.2500) rotate(0.05)" font-size="40" fill="#000" stroke="#000" stroke-width="0.5">bootvis.exe(2968)</text>
<rect x="774" y="718" width="2" height="129" fill="#a06466"/><rect x="770.5" y="710.5" width="9" height="7" fill="#a06466" stroke="#000" stroke-width="1"/>
<rect x="774.5" y="727.5" width="4" height="19" fill="#d2c800" stroke="#000" stroke-width="1"/>
<rect x="759.5" y="747.5" width="4" height="19" fill="#d2c800" stroke="#000" stroke-width="1"/>
<rect x="759.5" y="767.5" width="4" height="19" fill="#d2c800" stroke="#000" stroke-width="1"/>
<rect x="759.5" y="787.5" width="4" height="19" fill="#d2c800" stroke="#000" stroke-width="1"/>
<rect x="739.5" y="807.5" width="4" height="19" fill="#d2c800" stroke="#000" stroke-width="1"/>
<rect x="735.5" y="827.5" width="4" height="19" fill="#d2c800" stroke="#000" stroke-width="1"/>
<rect x="1281.5" y="827.5" width="4" height="19" fill="#d2c800" stroke="#000" stroke-width="1"/>
<rect x="1589.5" y="827.5" width="4" height="19" fill="#d2c800" stroke="#000" stroke-width="1"/>
<rect x="272" y="917" width="1" height="128" fill="#000"/>
<rect x="273" y="926" width="4" height="1" fill="#808080"/>
<rect x="273" y="946" width="4" height="1" fill="#808080"/>
<rect x="273" y="966" width="4" height="1" fill="#808080"/>
<rect x="273" y="986" width="4" height="1" fill="#808080"/>
<rect x="273" y="1006" width="4" height="1" fill="#808080"/>
<rect x="273" y="1026" width="4" height="1" fill="#808080"/>
<text transform="translate(231,912) scale(0.3197,0.2500) rotate(0.05)" font-size="40" fill="#000" stroke="#000" stroke-width="0.5">Drivers</text>
<text transform="translate(162.5,937.5) scale(0.3318,0.2500) rotate(0.05)" font-size="40" fill="#000" stroke="#000" stroke-width="0.5">ati2mtag.sys</text>
<text transform="translate(162.5,957.5) scale(0.3240,0.2500) rotate(0.05)" font-size="40" fill="#000" stroke="#000" stroke-width="0.5">ps/2</text>
<text transform="translate(162.5,977.5) scale(0.3374,0.2500) rotate(0.05)" font-size="40" fill="#000" stroke="#000" stroke-width="0.5">kbdclass.sys</text>
<text transform="translate(162.5,997.5) scale(0.3235,0.2500) rotate(0.05)" font-size="40" fill="#000" stroke="#000" stroke-width="0.5">ntkrnlpa.exe</text>
<text transform="translate(162.5,1017.5) scale(0.3216,0.2500) rotate(0.05)" font-size="40" fill="#000" stroke="#000" stroke-width="0.5">unknown</text>
<text transform="translate(162.5,1037.5) scale(0.3283,0.2500) rotate(0.05)" font-size="40" fill="#000" stroke="#000" stroke-width="0.5">eamon.sys</text>
<rect x="320" y="1041" width="1" height="4" fill="#808080"/>
<rect x="368" y="1041" width="1" height="4" fill="#808080"/>
<rect x="416" y="1041" width="1" height="4" fill="#808080"/>
<rect x="464" y="1041" width="1" height="4" fill="#808080"/>
<rect x="512" y="1041" width="1" height="4" fill="#808080"/>
<rect x="560" y="1041" width="1" height="4" fill="#808080"/>
<rect x="608" y="1041" width="1" height="4" fill="#808080"/>
<rect x="656" y="1041" width="1" height="4" fill="#808080"/>
<rect x="704" y="1041" width="1" height="4" fill="#808080"/>
<rect x="752" y="1041" width="1" height="4" fill="#808080"/>
<rect x="800" y="1041" width="1" height="4" fill="#808080"/>
<rect x="848" y="1041" width="1" height="4" fill="#808080"/>
<rect x="896" y="1041" width="1" height="4" fill="#808080"/>
<rect x="944" y="1041" width="1" height="4" fill="#808080"/>
<rect x="992" y="1041" width="1" height="4" fill="#808080"/>
<rect x="1040" y="1041" width="1" height="4" fill="#808080"/>
<rect x="1088" y="1041" width="1" height="4" fill="#808080"/>
<rect x="1136" y="1041" width="1" height="4" fill="#808080"/>
<rect x="1184" y="1041" width="1" height="4" fill="#808080"/>
<rect x="1232" y="1041" width="1" height="4" fill="#808080"/>
<rect x="1280" y="1041" width="1" height="4" fill="#808080"/>
<rect x="1328" y="1041" width="1" height="4" fill="#808080"/>
<rect x="1376" y="1041" width="1" height="4" fill="#808080"/>
<rect x="1424" y="1041" width="1" height="4" fill="#808080"/>
<rect x="1472" y="1041" width="1" height="4" fill="#808080"/>
<rect x="1520" y="1041" width="1" height="4" fill="#808080"/>
<rect x="1568" y="1041" width="1" height="4" fill="#808080"/>
<rect x="640" y="917" width="1" height="128" fill="#c8c8c8"/>
<rect x="767.5" y="927.5" width="4" height="17" fill="#99cc99" stroke="#000" stroke-width="1"/>
<rect x="371.5" y="947.5" width="6" height="17" fill="#99cc99" stroke="#000" stroke-width="1"/>
<rect x="371.5" y="967.5" width="6" height="17" fill="#99cc99" stroke="#000" stroke-width="1"/>
<rect x="796.5" y="987.5" width="29" height="17" fill="#99cc99" stroke="#000" stroke-width="1"/>
<rect x="584.5" y="1007.5" width="95" height="17" fill="#99cc99" stroke="#000" stroke-width="1"/>
<rect x="595" y="1027" width="2" height="18" fill="#000"/>
<rect x="693" y="1027" width="2" height="18" fill="#000"/>
<rect x="706" y="1027" width="2" height="18" fill="#000"/>
<rect x="713" y="1027" width="2" height="18" fill="#000"/>
<rect x="762" y="1027" width="2" height="18" fill="#000"/>
<rect x="778" y="1027" width="1" height="18" fill="#000"/>
<rect x="781" y="1027" width="4" height="18" fill="#000"/>
<rect x="805" y="1027" width="3" height="18" fill="#000"/>
<rect x="818" y="1027" width="2" height="18" fill="#000"/>
<rect x="823" y="1027" width="2" height="18" fill="#000"/>
<rect x="697.5" y="1027.5" width="3" height="18" fill="#99cc99" stroke="#000" stroke-width="1"/>
<rect x="790.5" y="1027.5" width="6" height="18" fill="#99cc99" stroke="#000" stroke-width="1"/>
<rect x="801.5" y="1027.5" width="3" height="18" fill="#99cc99" stroke="#000" stroke-width="1"/>
<rect x="809.5" y="1027.5" width="3" height="18" fill="#99cc99" stroke="#000" stroke-width="1"/>
<rect x="814.5" y="1027.5" width="2" height="18" fill="#99cc99" stroke="#000" stroke-width="1"/>
<rect x="841.5" y="1027.5" width="2" height="18" fill="#99cc99" stroke="#000" stroke-width="1"/>
<rect x="858.5" y="1027.5" width="2" height="18" fill="#99cc99" stroke="#000" stroke-width="1"/>
<rect x="774" y="917" width="2" height="129" fill="#a06466"/><rect x="770.5" y="909.5" width="9" height="7" fill="#a06466" stroke="#000" stroke-width="1"/>
<rect x="659.5" y="983.5" width="84" height="29" fill="#ffffe1" stroke="#000" stroke-width="1"/>
<text transform="translate(662,996) scale(0.2682,0.2875) rotate(0.05)" font-size="40" fill="#000" stroke="#000" stroke-width="0.5">Driver: unknown</text>
<text transform="translate(662,1009) scale(0.2684,0.2875) rotate(0.05)" font-size="40" fill="#000" stroke="#000" stroke-width="0.5">Delay: 6.00 sec</text>
<rect x="1771.5" y="900.5" width="101" height="17" fill="#fff" stroke="#000" stroke-width="1"/>
<rect x="1777.5" y="906.5" width="7" height="7" fill="#99cc99" stroke="#000"/>
<text transform="translate(1790.5,913) scale(0.3386,0.2500) rotate(0.05)" font-size="40" fill="#000" stroke="#000" stroke-width="0.5">System IRP</text>
<path d="M1882.5 706l4-4l4 4" stroke="#4d6185" stroke-width="2" fill="none"/>
<path d="M1882.5 854l4 4l4-4" stroke="#4d6185" stroke-width="2" fill="none"/>
<path d="M1882.5 905l4-4l4 4" stroke="#4d6185" stroke-width="2" fill="none"/>
<path d="M1883.5 1020.5h6M1883.5 1022.5h6M1883.5 1024.5h6M1883.5 1026.5h6" stroke="#eef4fe" stroke-width="1"/>
<path d="M1884.5 1021.5h6M1884.5 1023.5h6M1884.5 1025.5h6M1884.5 1027.5h6" stroke="#8cb0f8" stroke-width="1"/>
</svg>
<div class="dlg"></div><div class="dtitle"></div><div class="dbody"></div>
<div style="left:959px;top:873px;width:14px;height:11px;background:#fff;border-top:1px solid #e8eeff;box-shadow:1px 1px 0 #0a3aa0"></div>
<span class="t" style="left:979.5px;top:874.28px;font-size:14.2px;font-weight:bold;color:#06247a;transform:scaleX(0.9238);">Driver: unknown</span>
<span class="t" style="left:978.5px;top:873.28px;font-size:14.2px;font-weight:bold;color:#fff;transform:scaleX(0.9238);">Driver: unknown</span>
<div class="db dis" style="left:1429px"></div><div class="db" style="left:1452px"></div><div class="db x" style="left:1475px"></div>
<span class="t" style="left:962.5px;top:896.78px;font-size:11.6px;color:#000;transform:scaleX(0.8292);">File</span>
<span class="t" style="left:990px;top:896.78px;font-size:11.6px;color:#000;transform:scaleX(0.9255);">Edit</span>
<span class="t" style="left:1020px;top:896.78px;font-size:11.6px;color:#000;transform:scaleX(0.9255);">Format</span>
<span class="t" style="left:1066.5px;top:896.78px;font-size:11.6px;color:#000;transform:scaleX(0.9387);">Data</span>
<div style="left:957px;top:912px;width:541px;height:1px;background:#fff"></div>
<span class="t" style="left:967.5px;top:919.78px;font-size:11.6px;color:#000;transform:scaleX(0.9061);">Driver Delays longer than 100 msec:</span>
<div style="left:967px;top:934px;width:521px;height:71px;background:#fff;border:1px solid;border-color:#716f64 #fff #fff #716f64;box-shadow:inset 1px 1px 0 #aca899"></div>
<div class="lvh" style="left:969px;width:123px"></div>
<div class="lvh" style="left:1092px;width:36px"></div>
<div class="lvh" style="left:1128px;width:87px"></div>
<div class="lvh" style="left:1215px;width:95px"></div>
<div class="lvh" style="left:1310px;width:114px"></div>
<div class="lvh" style="left:1424px;width:63px"></div>
<span class="t" style="left:975px;top:939.18px;font-size:11.6px;color:#000;transform:scaleX(0.9142);">Process (PID)</span>
<span class="t" style="left:1099px;top:939.18px;font-size:11.6px;color:#000;transform:scaleX(1.0436);">TID</span>
<span class="t" style="left:1134px;top:939.18px;font-size:11.6px;color:#000;transform:scaleX(0.9063);">Driver Name</span>
<span class="t" style="left:1238px;top:939.18px;font-size:11.6px;color:#000;transform:scaleX(0.9129);">Duration (sec)</span>
<span class="t" style="left:1339px;top:939.18px;font-size:11.6px;color:#000;transform:scaleX(0.9135);">Begin Time (sec)</span>
<span class="t" style="left:1448px;top:939.18px;font-size:11.6px;color:#000;transform:scaleX(0.9166);">End Tim</span>
<div style="left:1484px;top:937px;width:6px;height:15px;background:#ece9d8"></div>
<div style="left:1092px;top:953px;width:1px;height:33px;background:#ece9d8"></div>
<div style="left:1128px;top:953px;width:1px;height:33px;background:#ece9d8"></div>
<div style="left:1215px;top:953px;width:1px;height:33px;background:#ece9d8"></div>
<div style="left:1310px;top:953px;width:1px;height:33px;background:#ece9d8"></div>
<div style="left:1424px;top:953px;width:1px;height:33px;background:#ece9d8"></div>
<div style="left:969px;top:968px;width:518px;height:1px;background:#f1efe2"></div>
<div style="left:969px;top:982px;width:518px;height:1px;background:#f1efe2"></div>
<span class="t" style="left:973.5px;top:956.08px;font-size:11.6px;color:#000;transform:scaleX(0.9183);">svchost.exe (1272)</span>
<span class="t" style="left:1100.5px;top:956.08px;font-size:11.6px;color:#000;transform:scaleX(0.9304);">17...</span>
<span class="t" style="left:1134px;top:956.08px;font-size:11.6px;color:#000;transform:scaleX(1.0014);">unknown</span>
<span class="t" style="left:1282px;top:956.08px;font-size:11.6px;color:#000;transform:scaleX(0.9966);">6.00</span>
<span class="t" style="left:1391px;top:956.08px;font-size:11.6px;color:#000;transform:scaleX(0.9646);">19.54</span>
<span class="t" style="left:973.5px;top:970.08px;font-size:11.6px;color:#000;transform:scaleX(0.9002);">Idle (0)</span>
<span class="t" style="left:1110.5px;top:970.08px;font-size:11.6px;color:#000;transform:scaleX(0.9300);">0</span>
<span class="t" style="left:1134px;top:970.08px;font-size:11.6px;color:#000;transform:scaleX(1.0014);">unknown</span>
<span class="t" style="left:1282px;top:970.08px;font-size:11.6px;color:#000;transform:scaleX(0.9966);">3.00</span>
<span class="t" style="left:1391px;top:970.08px;font-size:11.6px;color:#000;transform:scaleX(0.9646);">22.54</span>
<div class="sbtrack" style="left:969px;top:987px;width:518px;height:17px;background:linear-gradient(#f3f1ec 0,#fdfdfa 40%,#fefefb 60%,#f4f3ee 100%)"></div>
<div class="sbbtn" style="left:969px;top:988px;width:16px;height:15px"></div>
<div class="sbbtn" style="left:1470px;top:988px;width:16px;height:15px"></div>
<div class="sbthumb" style="left:987px;top:988px;width:247px;height:15px;background:linear-gradient(#c9d7fc 0,#c1d1fb 45%,#b4c8f8 100%)"></div>
<div style="left:967px;top:1010px;width:521px;height:15px;border:1px solid;border-color:#aca899 #fff #fff #aca899"></div>
<span class="t" style="left:968.5px;top:1012.48px;font-size:11.6px;color:#000;transform:scaleX(0.9127);">&lt;Total: 2&gt;</span>
<svg width="1915" height="1047" viewBox="0 0 1915 1047">
<rect x="1434" y="882" width="7" height="3" fill="#b9cbf5"/>
<rect x="1457.5" y="874.5" width="10" height="9.500" fill="none" stroke="#fff" stroke-width="1.4"/><rect x="1457" y="874" width="11" height="2.8" fill="#fff"/>
<path d="M1481 874.700l9.500 9.500M1490.500 874.700l-9.500 9.500" stroke="#fff" stroke-width="2.2" fill="none"/>
<path d="M1323 947.5l3.5-4l3.5 4z" fill="#aca899"/>
<path d="M979.5 991.5l-4 4l4 4" stroke="#4d6185" stroke-width="2" fill="none"/>
<path d="M1476 991.5l4 4l-4 4" stroke="#4d6185" stroke-width="2" fill="none"/>
<path d="M1106.5 992.5v6M1108.5 992.5v6M1110.5 992.5v6M1112.5 992.5v6" stroke="#eef4fe" stroke-width="1"/>
<path d="M1107.5 993.5v6M1109.5 993.5v6M1111.5 993.5v6M1113.5 993.5v6" stroke="#8cb0f8" stroke-width="1"/>
</svg>
<div class="bottomstrip" style="left:0;top:1045px;width:1915px;height:2px;background:linear-gradient(#f7f6ef,#f0eee3)"></div>
</body></html>
